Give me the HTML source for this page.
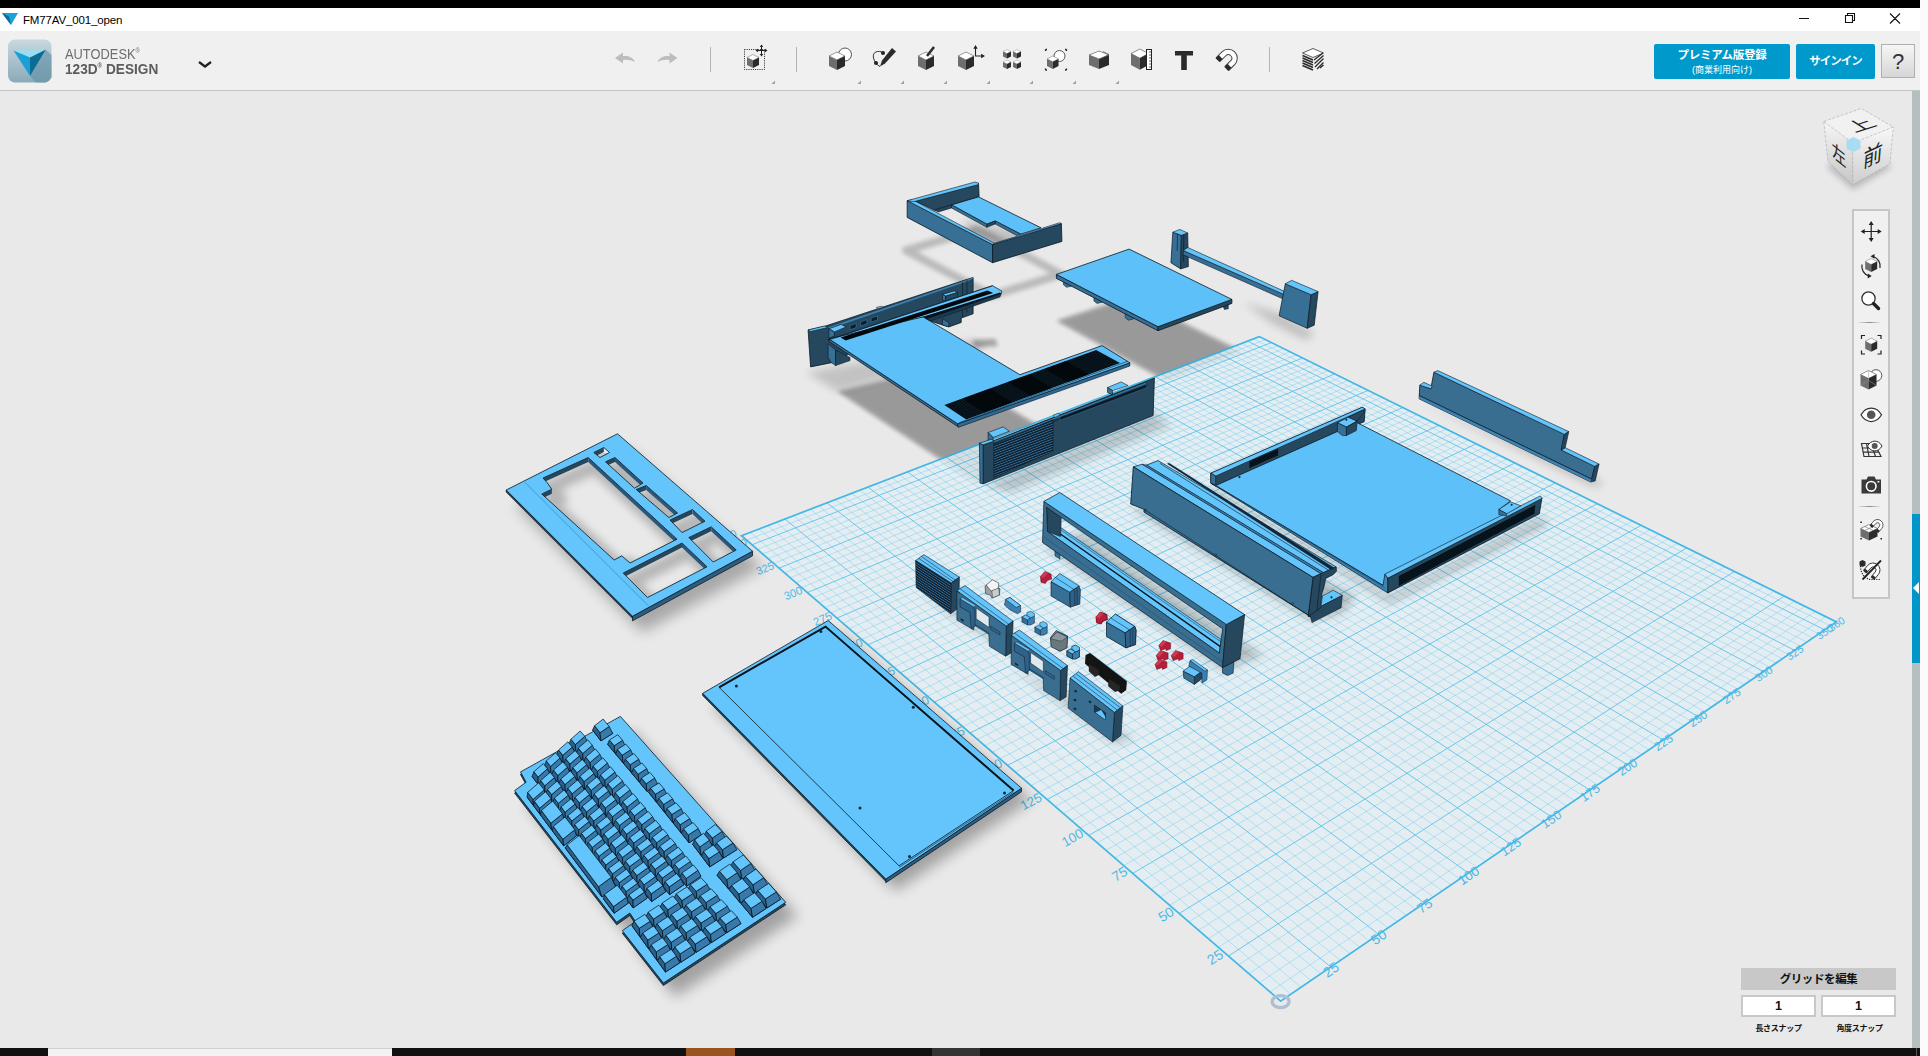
<!DOCTYPE html>
<html lang="ja"><head><meta charset="utf-8"><title>FM77AV_001_open</title>
<style>
html,body{margin:0;padding:0;}
body{width:1928px;height:1056px;overflow:hidden;position:relative;background:#fff;font-family:"Liberation Sans","Noto Sans CJK JP",sans-serif;}
.abs{position:absolute;}
#topblack{left:0;top:0;width:1920px;height:8px;background:#000;}
#title{left:0;top:8px;width:1920px;height:23px;background:#fff;}
#title .t{left:23px;top:5px;font-size:11.5px;color:#000;line-height:14px;letter-spacing:-0.15px;}
#toolbar{left:0;top:31px;width:1920px;height:59px;background:#f0f0f0;border-bottom:1px solid #c6c6c6;}
#view{left:0;top:91px;width:1912px;height:957px;background:#e9e9e9;overflow:hidden;}
#vscroll{left:1912px;top:91px;width:8px;height:957px;background:#b5bfbf;}
#vthumb{left:1912px;top:514px;width:8px;height:149px;background:#0096c8;}
#rightedge{left:1920px;top:0;width:8px;height:1056px;background:#fbfbfb;}
#taskbar{left:0;top:1048px;width:1920px;height:8px;background:#111;}
.btn{background:#0099cc;color:#fff;text-align:center;font-weight:bold;border-radius:2px;}
#b1{left:1654px;top:44px;width:136px;height:35px;}
#b1 .a{font-size:11.500px;line-height:14px;margin-top:3.500px;letter-spacing:-0.300px;}
#b1 .b{font-size:9px;line-height:11px;margin-top:3px;font-weight:normal;}
#b2{left:1796px;top:44px;width:79px;height:35px;font-size:11.500px;line-height:35px;letter-spacing:-1px;}
#b3{left:1881px;top:44px;width:32px;height:32px;border:1px solid #b0b0b0;background:linear-gradient(#f6f6f6,#d6d6d6);text-align:center;font-size:22px;line-height:33px;color:#333;}
#brand1{left:64.500px;top:43.200px;font-size:15.500px;line-height:16px;color:#6e6e6e;transform:scaleX(0.830);transform-origin:0 0;white-space:nowrap;}
#brand2{left:64.500px;top:58.400px;font-size:15.500px;line-height:16px;color:#5c5c5c;font-weight:bold;transform:scaleX(0.880);transform-origin:0 0;white-space:nowrap;}
#panel{left:1852px;top:209px;width:34px;height:385.500px;border:2px solid #c6c6c6;background:#f0f0f0;}
#ghead{left:1741px;top:968px;width:155px;height:22px;background:#c8c8c8;text-align:center;font-size:11.500px;font-weight:bold;line-height:22px;color:#111;letter-spacing:-0.400px;}
.gin{top:995px;width:71px;height:18px;border:2px solid #c8c8c8;background:#fff;text-align:center;font-size:12.500px;font-weight:bold;line-height:18px;color:#111;}
.glab{top:1022.500px;width:75px;text-align:center;font-size:8px;font-weight:bold;line-height:11px;color:#111;letter-spacing:-0.300px;}
</style></head><body>
<div class="abs" id="view"><svg id="scene" width="1912" height="957" viewBox="0 91 1912 957" font-family="Liberation Sans, sans-serif">
<defs><filter id="bl" x="-30%" y="-30%" width="160%" height="160%"><feGaussianBlur stdDeviation="7"/></filter><filter id="bl3" x="-30%" y="-30%" width="160%" height="160%"><feGaussianBlur stdDeviation="2.2"/></filter><filter id="bl2" x="-30%" y="-30%" width="160%" height="160%"><feGaussianBlur stdDeviation="4"/></filter></defs>
<polygon points="806,372 838,392 930,368 985,348 975,340 905,354" fill="#000" opacity="0.16" filter="url(#bl2)"/>
<polygon points="1056.4,320.7 1130,297 1243,352 1166,381" fill="#000" opacity="0.29" filter="url(#bl3)"/>
<polygon points="837.5,391.5 941,367.3 1047.4,430.9 1137.8,398.8 1168.4,417.7 978.9,484.8" fill="#000" opacity="0.29" filter="url(#bl3)"/>
<polygon points="1280.6,1001.1 741.5,535.7 1259.3,336.6 1836.4,621.9" fill="#e4eef2"/>
<path d="M1290.8 994.1L750.3 532.3M1269.9 991.9L1825.8 616.7M1300.9 987.3L759 529M1259.3 982.7L1815.3 611.5M1310.9 980.4L767.7 525.6M1248.9 973.7L1804.9 606.3M1320.8 973.7L776.4 522.3M1238.6 964.8L1794.5 601.2M1340.4 960.3L793.5 515.7M1218.3 947.3L1774.2 591.1M1350.1 953.7L801.9 512.5M1208.4 938.7L1764.1 586.2M1359.6 947.2L810.4 509.2M1198.5 930.2L1754.2 581.2M1369.1 940.7L818.7 506M1188.8 921.8L1744.3 576.4M1387.9 927.9L835.3 499.6M1169.7 905.3L1724.8 566.7M1397.1 921.6L843.5 496.5M1160.2 897.2L1715.2 562M1406.3 915.3L851.7 493.3M1151 889.2L1705.6 557.3M1415.4 909.1L859.8 490.2M1141.8 881.2L1696.2 552.6M1433.3 896.9L875.9 484M1123.7 865.6L1677.5 543.4M1442.2 890.8L883.9 481M1114.8 858L1668.3 538.8M1451 884.9L891.8 477.9M1106 850.4L1659.2 534.3M1459.7 878.9L899.7 474.9M1097.3 842.9L1650.1 529.8M1476.9 867.2L915.3 468.9M1080.2 828.1L1632.2 521M1485.4 861.4L923 465.9M1071.8 820.8L1623.4 516.6M1493.9 855.6L930.7 462.9M1063.4 813.6L1614.6 512.3M1502.2 849.9L938.4 460M1055.2 806.5L1606 508M1518.7 838.6L953.6 454.2M1039 792.5L1588.8 499.5M1526.9 833.1L961.1 451.3M1031 785.6L1580.3 495.3M1535 827.5L968.5 448.4M1023.1 778.8L1571.9 491.1M1543 822.1L976 445.5M1015.3 772L1563.6 487M1558.9 811.2L990.7 439.9M999.9 758.7L1547.1 478.9M1566.7 805.9L998 437.1M992.3 752.2L1539 474.9M1574.5 800.6L1005.3 434.3M984.8 745.7L1530.9 470.9M1582.2 795.3L1012.5 431.5M977.4 739.3L1522.9 466.9M1597.5 784.9L1026.8 426M962.7 726.7L1507 459.1M1605 779.8L1033.9 423.3M955.5 720.4L1499.2 455.2M1612.5 774.7L1040.9 420.6M948.4 714.3L1491.4 451.4M1619.9 769.6L1048 417.9M941.3 708.2L1483.7 447.6M1634.6 759.6L1061.9 412.5M927.4 696.2L1468.5 440M1641.8 754.6L1068.8 409.9M920.5 690.2L1461 436.3M1649 749.7L1075.6 407.2M913.7 684.4L1453.5 432.6M1656.2 744.9L1082.5 404.6M907 678.5L1446.1 429M1670.3 735.2L1096 399.4M893.7 667.1L1431.5 421.7M1677.3 730.4L1102.7 396.8M887.1 661.4L1424.2 418.1M1684.2 725.7L1109.4 394.2M880.7 655.8L1417 414.6M1691.1 721L1116 391.7M874.2 650.3L1409.9 411M1704.7 711.7L1129.2 386.6M861.6 639.4L1395.8 404.1M1711.5 707.1L1135.7 384.1M855.3 634L1388.8 400.6M1718.1 702.6L1142.2 381.6M849.1 628.6L1381.9 397.2M1724.8 698.1L1148.7 379.1M843 623.3L1375 393.8M1737.9 689.1L1161.5 374.2M830.9 612.9L1361.4 387.1M1744.4 684.7L1167.9 371.8M824.9 607.7L1354.7 383.7M1750.8 680.3L1174.2 369.3M819 602.6L1348 380.4M1757.2 675.9L1180.5 366.9M813.2 597.6L1341.3 377.2M1769.9 667.3L1193 362.1M801.6 587.6L1328.2 370.7M1776.1 663L1199.1 359.7M795.9 582.7L1321.7 367.5M1782.4 658.8L1205.3 357.4M790.2 577.8L1315.3 364.3M1788.5 654.6L1211.4 355M784.6 572.9L1308.9 361.1M1800.7 646.2L1223.6 350.3M773.6 563.4L1296.2 354.9M1806.8 642.1L1229.6 348M768.1 558.7L1290 351.8M1812.8 638L1235.6 345.7M762.7 554L1283.8 348.7M1818.8 633.9L1241.6 343.4M757.3 549.4L1277.6 345.6M1830.6 625.9L1253.4 338.9M746.7 540.2L1265.3 339.6" stroke="#6cc8ec" stroke-width="0.7" opacity="0.6" fill="none"/>
<path d="M1280.6 1001.1L741.5 535.7M1280.6 1001.1L1836.4 621.9M1330.7 966.9L784.9 519M1228.4 956L1784.3 596.1M1378.5 934.3L827 502.8M1179.2 913.5L1734.5 571.5M1424.4 903L867.9 487.1M1132.7 873.4L1686.8 548M1468.3 873L907.5 471.9M1088.7 835.4L1641.1 525.4M1510.5 844.2L946 457.1M1047 799.5L1597.3 503.7M1551 816.6L983.4 442.7M1007.5 765.4L1555.3 482.9M1589.9 790.1L1019.7 428.7M970 733L1514.9 463M1627.3 764.6L1054.9 415.2M934.3 702.1L1476.1 443.8M1663.3 740L1089.3 402M900.3 672.8L1438.8 425.3M1697.9 716.4L1122.6 389.2M867.9 644.8L1402.8 407.5M1731.4 693.6L1155.1 376.7M836.9 618.1L1368.2 390.4M1763.6 671.6L1186.7 364.5M807.4 592.6L1334.8 373.9M1794.7 650.4L1217.5 352.7M779.1 568.1L1302.5 358M1824.7 629.9L1247.5 341.1M752 544.8L1271.4 342.6M1836.4 621.9L1259.3 336.6M741.5 535.7L1259.3 336.6" stroke="#55c0e9" stroke-width="1" opacity="0.85" fill="none"/>
<polygon points="1280.6,1001.1 741.5,535.7 1259.3,336.6 1836.4,621.9" fill="none" stroke="#45b8e6" stroke-width="1.7"/>
<text x="1228.4" y="956" font-size="14.2" text-anchor="end" transform="rotate(-32.9 1228.4 956)" fill="#4ab9e8" dx="-4" dy="-1.4">25</text>
<text x="1330.7" y="966.9" font-size="14.2" text-anchor="middle" transform="rotate(-34.3 1330.7 966.9)" fill="#4ab9e8" dx="-1.4" dy="7.4">25</text>
<text x="1179.2" y="913.5" font-size="13.9" text-anchor="end" transform="rotate(-31.6 1179.2 913.5)" fill="#4ab9e8" dx="-4" dy="-1.4">50</text>
<text x="1378.5" y="934.3" font-size="13.9" text-anchor="middle" transform="rotate(-34.3 1378.5 934.3)" fill="#4ab9e8" dx="-1.4" dy="7.3">50</text>
<text x="1132.7" y="873.4" font-size="13.7" text-anchor="end" transform="rotate(-30.4 1132.7 873.4)" fill="#4ab9e8" dx="-4" dy="-1.4">75</text>
<text x="1424.4" y="903" font-size="13.7" text-anchor="middle" transform="rotate(-34.3 1424.4 903)" fill="#4ab9e8" dx="-1.4" dy="7.1">75</text>
<text x="1088.7" y="835.4" font-size="13.4" text-anchor="end" transform="rotate(-29.3 1088.7 835.4)" fill="#4ab9e8" dx="-4" dy="-1.3">100</text>
<text x="1468.3" y="873" font-size="13.4" text-anchor="middle" transform="rotate(-34.3 1468.3 873)" fill="#4ab9e8" dx="-1.3" dy="7">100</text>
<text x="1047" y="799.5" font-size="13.1" text-anchor="end" transform="rotate(-28.3 1047 799.5)" fill="#4ab9e8" dx="-4" dy="-1.3">125</text>
<text x="1510.5" y="844.2" font-size="13.1" text-anchor="middle" transform="rotate(-34.3 1510.5 844.2)" fill="#4ab9e8" dx="-1.3" dy="6.8">125</text>
<text x="1007.5" y="765.4" font-size="12.8" text-anchor="end" transform="rotate(-27.3 1007.5 765.4)" fill="#4ab9e8" dx="-4" dy="-1.3">150</text>
<text x="1551" y="816.6" font-size="12.8" text-anchor="middle" transform="rotate(-34.3 1551 816.6)" fill="#4ab9e8" dx="-1.3" dy="6.7">150</text>
<text x="970" y="733" font-size="12.6" text-anchor="end" transform="rotate(-26.4 970 733)" fill="#4ab9e8" dx="-4" dy="-1.3">175</text>
<text x="1589.9" y="790.1" font-size="12.6" text-anchor="middle" transform="rotate(-34.3 1589.9 790.1)" fill="#4ab9e8" dx="-1.3" dy="6.5">175</text>
<text x="934.3" y="702.1" font-size="12.3" text-anchor="end" transform="rotate(-25.5 934.3 702.1)" fill="#4ab9e8" dx="-4" dy="-1.2">200</text>
<text x="1627.3" y="764.6" font-size="12.3" text-anchor="middle" transform="rotate(-34.3 1627.3 764.6)" fill="#4ab9e8" dx="-1.2" dy="6.4">200</text>
<text x="900.3" y="672.8" font-size="12" text-anchor="end" transform="rotate(-24.7 900.3 672.8)" fill="#4ab9e8" dx="-4" dy="-1.2">225</text>
<text x="1663.3" y="740" font-size="12" text-anchor="middle" transform="rotate(-34.3 1663.3 740)" fill="#4ab9e8" dx="-1.2" dy="6.2">225</text>
<text x="867.9" y="644.8" font-size="11.7" text-anchor="end" transform="rotate(-23.9 867.9 644.8)" fill="#4ab9e8" dx="-4" dy="-1.2">250</text>
<text x="1697.9" y="716.4" font-size="11.7" text-anchor="middle" transform="rotate(-34.3 1697.9 716.4)" fill="#4ab9e8" dx="-1.2" dy="6.1">250</text>
<text x="836.9" y="618.1" font-size="11.4" text-anchor="end" transform="rotate(-23.2 836.9 618.1)" fill="#4ab9e8" dx="-4" dy="-1.1">275</text>
<text x="1731.4" y="693.6" font-size="11.4" text-anchor="middle" transform="rotate(-34.3 1731.4 693.6)" fill="#4ab9e8" dx="-1.1" dy="6">275</text>
<text x="807.4" y="592.6" font-size="11.2" text-anchor="end" transform="rotate(-22.5 807.4 592.6)" fill="#4ab9e8" dx="-4" dy="-1.1">300</text>
<text x="1763.6" y="671.6" font-size="11.2" text-anchor="middle" transform="rotate(-34.3 1763.6 671.6)" fill="#4ab9e8" dx="-1.1" dy="5.8">300</text>
<text x="779.1" y="568.1" font-size="10.9" text-anchor="end" transform="rotate(-21.9 779.1 568.1)" fill="#4ab9e8" dx="-4" dy="-1.1">325</text>
<text x="1794.7" y="650.4" font-size="10.9" text-anchor="middle" transform="rotate(-34.3 1794.7 650.4)" fill="#4ab9e8" dx="-1.1" dy="5.7">325</text>
<text x="752" y="544.8" font-size="10.6" text-anchor="end" transform="rotate(-21.3 752 544.8)" fill="#4ab9e8" dx="-4" dy="-1.1">350</text>
<text x="1824.7" y="629.9" font-size="10.6" text-anchor="middle" transform="rotate(-34.3 1824.7 629.9)" fill="#4ab9e8" dx="-1.1" dy="5.5">350</text>
<text x="741.5" y="535.7" font-size="10.5" text-anchor="end" transform="rotate(-21 741.5 535.7)" fill="#4ab9e8" dx="-4" dy="-1.1">360</text>
<text x="1836.4" y="621.9" font-size="10.5" text-anchor="middle" transform="rotate(-34.3 1836.4 621.9)" fill="#4ab9e8" dx="-1.1" dy="5.5">360</text>
<ellipse cx="1280.6" cy="1001.6" rx="8.5" ry="6" fill="none" stroke="#adbfd0" stroke-width="3.2"/>
<polygon points="516.2,506 627.5,449.8 762.5,567.2 642.5,632.2" fill="#000" opacity="0.28" filter="url(#bl)"/>
<polygon points="506.2,490 632.5,616.2 632.5,618.2 506.2,492" fill="#26485f" stroke="#0b1822" stroke-width="0.8" stroke-linejoin="round"/>
<polygon points="632.5,616.2 752.5,551.2 752.5,555.8 632.5,620.8" fill="#2e5d80" stroke="#0b1822" stroke-width="0.8" stroke-linejoin="round"/>
<polygon points="506.2,490 617.5,433.8 752.5,551.2 632.5,616.2" fill="#63c5fb" stroke="#0b1822" stroke-width="0.8" stroke-linejoin="round"/>
<polyline points="523.8,481.2 648.8,606.2" fill="none" stroke="#3b8fc4" stroke-width="0.8"/>
<clipPath id="kf0"><polygon points="543,478 588.2,457.5 677,539.2 630,563 621.8,555.8 614.2,560 541.8,494 551.8,489.2 547,482.5"/></clipPath><g clip-path="url(#kf0)">
<polygon points="543,478 588.2,457.5 677,539.2 630,563 621.8,555.8 614.2,560 541.8,494 551.8,489.2 547,482.5" fill="#e9e9e9"/>
<polygon points="543,478 588.2,457.5 677,539.2 630,563 621.8,555.8 614.2,560 541.8,494 551.8,489.2 547,482.5" fill="#000" opacity="0.0" filter="url(#bl)"/>
<polygon points="543,478 588.2,457.5 677,539.2 630,563 621.8,555.8 614.2,560 541.8,494 551.8,489.2 547,482.5" fill="none" stroke="#000" stroke-width="14" opacity="0.22" filter="url(#bl2)" transform="translate(7,9)"/>
<polygon points="543,478 588.2,457.5 588.2,462 543,482.5" fill="#26485f"/>
<polygon points="588.2,457.5 677,539.2 677,543.8 588.2,462" fill="#2b587a"/>
<polygon points="541.8,494 551.8,489.2 551.8,493.8 541.8,498.5" fill="#26485f"/>
</g>
<polyline points="543,478 588.2,457.5 677,539.2 630,563 621.8,555.8 614.2,560 541.8,494 551.8,489.2 547,482.5 543,478" fill="none" stroke="#0b1822" stroke-width="0.8"/>
<clipPath id="kf1"><polygon points="605.5,461.8 615,457.5 643,483 634.5,488.2"/></clipPath><g clip-path="url(#kf1)">
<polygon points="605.5,461.8 615,457.5 643,483 634.5,488.2" fill="#e9e9e9"/>
<polygon points="605.5,461.8 615,457.5 643,483 634.5,488.2" fill="#000" opacity="0.0" filter="url(#bl)"/>
<polygon points="605.5,461.8 615,457.5 643,483 634.5,488.2" fill="none" stroke="#000" stroke-width="14" opacity="0.22" filter="url(#bl2)" transform="translate(7,9)"/>
<polygon points="605.5,461.8 615,457.5 615,462 605.5,466.2" fill="#26485f"/>
<polygon points="615,457.5 643,483 643,487.5 615,462" fill="#2b587a"/>
</g>
<polyline points="605.5,461.8 615,457.5 643,483 634.5,488.2 605.5,461.8" fill="none" stroke="#0b1822" stroke-width="0.8"/>
<clipPath id="kf2"><polygon points="636.2,489.5 646.2,485.5 677.5,513 668.8,517.5"/></clipPath><g clip-path="url(#kf2)">
<polygon points="636.2,489.5 646.2,485.5 677.5,513 668.8,517.5" fill="#e9e9e9"/>
<polygon points="636.2,489.5 646.2,485.5 677.5,513 668.8,517.5" fill="#000" opacity="0.0" filter="url(#bl)"/>
<polygon points="636.2,489.5 646.2,485.5 677.5,513 668.8,517.5" fill="none" stroke="#000" stroke-width="14" opacity="0.22" filter="url(#bl2)" transform="translate(7,9)"/>
<polygon points="636.2,489.5 646.2,485.5 646.2,490 636.2,494" fill="#26485f"/>
<polygon points="646.2,485.5 677.5,513 677.5,517.5 646.2,490" fill="#2b587a"/>
</g>
<polyline points="636.2,489.5 646.2,485.5 677.5,513 668.8,517.5 636.2,489.5" fill="none" stroke="#0b1822" stroke-width="0.8"/>
<clipPath id="kf3"><polygon points="670,520 692.5,509.5 705,521.2 682,532.5"/></clipPath><g clip-path="url(#kf3)">
<polygon points="670,520 692.5,509.5 705,521.2 682,532.5" fill="#e9e9e9"/>
<polygon points="670,520 692.5,509.5 705,521.2 682,532.5" fill="#000" opacity="0.0" filter="url(#bl)"/>
<polygon points="670,520 692.5,509.5 705,521.2 682,532.5" fill="none" stroke="#000" stroke-width="14" opacity="0.22" filter="url(#bl2)" transform="translate(7,9)"/>
<polygon points="670,520 692.5,509.5 692.5,514 670,524.5" fill="#26485f"/>
<polygon points="692.5,509.5 705,521.2 705,525.8 692.5,514" fill="#2b587a"/>
</g>
<polyline points="670,520 692.5,509.5 705,521.2 682,532.5 670,520" fill="none" stroke="#0b1822" stroke-width="0.8"/>
<clipPath id="kf4"><polygon points="688.8,537.5 711.2,526.8 736.2,550 713.2,562"/></clipPath><g clip-path="url(#kf4)">
<polygon points="688.8,537.5 711.2,526.8 736.2,550 713.2,562" fill="#e9e9e9"/>
<polygon points="688.8,537.5 711.2,526.8 736.2,550 713.2,562" fill="#000" opacity="0.0" filter="url(#bl)"/>
<polygon points="688.8,537.5 711.2,526.8 736.2,550 713.2,562" fill="none" stroke="#000" stroke-width="14" opacity="0.22" filter="url(#bl2)" transform="translate(7,9)"/>
<polygon points="688.8,537.5 711.2,526.8 711.2,531.2 688.8,542" fill="#26485f"/>
<polygon points="711.2,526.8 736.2,550 736.2,554.5 711.2,531.2" fill="#2b587a"/>
</g>
<polyline points="688.8,537.5 711.2,526.8 736.2,550 713.2,562 688.8,537.5" fill="none" stroke="#0b1822" stroke-width="0.8"/>
<clipPath id="kf5"><polygon points="623.2,573 682,543 707,566.8 647.5,597.5"/></clipPath><g clip-path="url(#kf5)">
<polygon points="623.2,573 682,543 707,566.8 647.5,597.5" fill="#e9e9e9"/>
<polygon points="623.2,573 682,543 707,566.8 647.5,597.5" fill="#000" opacity="0.0" filter="url(#bl)"/>
<polygon points="623.2,573 682,543 707,566.8 647.5,597.5" fill="none" stroke="#000" stroke-width="14" opacity="0.22" filter="url(#bl2)" transform="translate(7,9)"/>
<polygon points="623.2,573 682,543 682,547.5 623.2,577.5" fill="#26485f"/>
<polygon points="682,543 707,566.8 707,571.2 682,547.5" fill="#2b587a"/>
</g>
<polyline points="623.2,573 682,543 707,566.8 647.5,597.5 623.2,573" fill="none" stroke="#0b1822" stroke-width="0.8"/>
<clipPath id="kf6"><polygon points="593.8,452.5 603.8,447.5 609.5,452.5 600,457.5"/></clipPath><g clip-path="url(#kf6)">
<polygon points="593.8,452.5 603.8,447.5 609.5,452.5 600,457.5" fill="#e9e9e9"/>
<polygon points="593.8,452.5 603.8,447.5 609.5,452.5 600,457.5" fill="#000" opacity="0.0" filter="url(#bl)"/>
<polygon points="593.8,452.5 603.8,447.5 609.5,452.5 600,457.5" fill="none" stroke="#000" stroke-width="14" opacity="0.22" filter="url(#bl2)" transform="translate(7,9)"/>
<polygon points="593.8,452.5 603.8,447.5 603.8,452 593.8,457" fill="#26485f"/>
</g>
<polyline points="593.8,452.5 603.8,447.5 609.5,452.5 600,457.5 593.8,452.5" fill="none" stroke="#0b1822" stroke-width="0.8"/>
<polygon points="632.4,730.4 797.7,916.3 675.4,997 634.3,944.7 647.4,935.4 641.8,927 628.7,936.3 526.6,804.6 538.1,796.2 532.5,785.9" fill="#000" opacity="0.3" filter="url(#bl)"/>
<polygon points="620.4,718.9 785.7,904.8 663.4,985.5 622.3,933.2 635.4,923.9 629.8,915.5 616.7,924.8 514.6,793.1 526.1,784.7 520.5,774.4" fill="#26485f" stroke="#0b1822" stroke-width="0.8" stroke-linejoin="round"/>
<polygon points="620.4,716.4 785.7,902.3 663.4,983 622.3,930.7 635.4,921.4 629.8,913 616.7,922.3 514.6,790.6 526.1,782.2 520.5,771.9" fill="#63c5fb" stroke="#0b1822" stroke-width="0.8" stroke-linejoin="round"/>
<polygon points="580.5,733.8 569,744 575.9,752.4 587.6,742.2" fill="#2b608a" stroke="#050d14" stroke-width="0.7" stroke-linejoin="round"/>
<polygon points="569,744 575.9,752.4 575.3,744.6 570.9,739.2" fill="#2b608a" stroke="#050d14" stroke-width="0.7" stroke-linejoin="round"/>
<polygon points="575.9,752.4 587.6,742.2 584.8,736.3 575.3,744.6" fill="#3779aa" stroke="#050d14" stroke-width="0.7" stroke-linejoin="round"/>
<polygon points="580.2,731 570.9,739.2 575.3,744.6 584.8,736.3" fill="#63c5fb" stroke="#050d14" stroke-width="0.7" stroke-linejoin="round"/>
<polygon points="588.1,742.8 576.3,752.9 583.3,761.3 595.2,751.2" fill="#2b608a" stroke="#050d14" stroke-width="0.7" stroke-linejoin="round"/>
<polygon points="576.3,752.9 583.3,761.3 582.7,753.5 578.3,748.1" fill="#2b608a" stroke="#050d14" stroke-width="0.7" stroke-linejoin="round"/>
<polygon points="583.3,761.3 595.2,751.2 592.3,745.3 582.7,753.5" fill="#3779aa" stroke="#050d14" stroke-width="0.7" stroke-linejoin="round"/>
<polygon points="587.8,739.9 578.3,748.1 582.7,753.5 592.3,745.3" fill="#63c5fb" stroke="#050d14" stroke-width="0.7" stroke-linejoin="round"/>
<polygon points="595.6,751.7 583.7,761.8 590.7,770.2 602.7,760.1" fill="#2b608a" stroke="#050d14" stroke-width="0.7" stroke-linejoin="round"/>
<polygon points="583.7,761.8 590.7,770.2 590.1,762.4 585.7,757.1" fill="#2b608a" stroke="#050d14" stroke-width="0.7" stroke-linejoin="round"/>
<polygon points="590.7,770.2 602.7,760.1 599.8,754.2 590.1,762.4" fill="#3779aa" stroke="#050d14" stroke-width="0.7" stroke-linejoin="round"/>
<polygon points="595.3,748.9 585.7,757.1 590.1,762.4 599.8,754.2" fill="#63c5fb" stroke="#050d14" stroke-width="0.7" stroke-linejoin="round"/>
<polygon points="603.2,760.6 591.1,770.8 598,779.1 610.3,769" fill="#2b608a" stroke="#050d14" stroke-width="0.7" stroke-linejoin="round"/>
<polygon points="591.1,770.8 598,779.1 597.5,771.3 593.1,766" fill="#2b608a" stroke="#050d14" stroke-width="0.7" stroke-linejoin="round"/>
<polygon points="598,779.1 610.3,769 607.4,763.1 597.5,771.3" fill="#3779aa" stroke="#050d14" stroke-width="0.7" stroke-linejoin="round"/>
<polygon points="602.9,757.8 593.1,766 597.5,771.3 607.4,763.1" fill="#63c5fb" stroke="#050d14" stroke-width="0.7" stroke-linejoin="round"/>
<polygon points="610.7,769.6 598.5,779.7 605.4,788.1 617.9,778" fill="#2b608a" stroke="#050d14" stroke-width="0.7" stroke-linejoin="round"/>
<polygon points="598.5,779.7 605.4,788.1 604.9,780.2 600.5,774.9" fill="#2b608a" stroke="#050d14" stroke-width="0.7" stroke-linejoin="round"/>
<polygon points="605.4,788.1 617.9,778 614.9,772.1 604.9,780.2" fill="#3779aa" stroke="#050d14" stroke-width="0.7" stroke-linejoin="round"/>
<polygon points="610.4,766.7 600.5,774.9 604.9,780.2 614.9,772.1" fill="#63c5fb" stroke="#050d14" stroke-width="0.7" stroke-linejoin="round"/>
<polygon points="618.3,778.5 605.9,788.6 612.8,797 625.4,786.9" fill="#2b608a" stroke="#050d14" stroke-width="0.7" stroke-linejoin="round"/>
<polygon points="605.9,788.6 612.8,797 612.3,789.2 607.9,783.8" fill="#2b608a" stroke="#050d14" stroke-width="0.7" stroke-linejoin="round"/>
<polygon points="612.8,797 625.4,786.9 622.5,781 612.3,789.2" fill="#3779aa" stroke="#050d14" stroke-width="0.7" stroke-linejoin="round"/>
<polygon points="617.9,775.6 607.9,783.8 612.3,789.2 622.5,781" fill="#63c5fb" stroke="#050d14" stroke-width="0.7" stroke-linejoin="round"/>
<polygon points="625.9,787.4 613.3,797.5 620.2,805.9 633,795.8" fill="#2b608a" stroke="#050d14" stroke-width="0.7" stroke-linejoin="round"/>
<polygon points="613.3,797.5 620.2,805.9 619.7,798.1 615.3,792.7" fill="#2b608a" stroke="#050d14" stroke-width="0.7" stroke-linejoin="round"/>
<polygon points="620.2,805.9 633,795.8 630,789.9 619.7,798.1" fill="#3779aa" stroke="#050d14" stroke-width="0.7" stroke-linejoin="round"/>
<polygon points="625.5,784.6 615.3,792.7 619.7,798.1 630,789.9" fill="#63c5fb" stroke="#050d14" stroke-width="0.7" stroke-linejoin="round"/>
<polygon points="633.4,796.4 620.6,806.4 627.6,814.8 640.5,804.8" fill="#2b608a" stroke="#050d14" stroke-width="0.7" stroke-linejoin="round"/>
<polygon points="620.6,806.4 627.6,814.8 627.1,807 622.7,801.7" fill="#2b608a" stroke="#050d14" stroke-width="0.7" stroke-linejoin="round"/>
<polygon points="627.6,814.8 640.5,804.8 637.5,798.9 627.1,807" fill="#3779aa" stroke="#050d14" stroke-width="0.7" stroke-linejoin="round"/>
<polygon points="633,793.5 622.7,801.7 627.1,807 637.5,798.9" fill="#63c5fb" stroke="#050d14" stroke-width="0.7" stroke-linejoin="round"/>
<polygon points="641,805.3 628,815.4 635,823.7 648.1,813.7" fill="#2b608a" stroke="#050d14" stroke-width="0.7" stroke-linejoin="round"/>
<polygon points="628,815.4 635,823.7 634.5,815.9 630.1,810.6" fill="#2b608a" stroke="#050d14" stroke-width="0.7" stroke-linejoin="round"/>
<polygon points="635,823.7 648.1,813.7 645.1,807.8 634.5,815.9" fill="#3779aa" stroke="#050d14" stroke-width="0.7" stroke-linejoin="round"/>
<polygon points="640.6,802.4 630.1,810.6 634.5,815.9 645.1,807.8" fill="#63c5fb" stroke="#050d14" stroke-width="0.7" stroke-linejoin="round"/>
<polygon points="648.5,814.2 635.4,824.3 642.3,832.7 655.6,822.6" fill="#2b608a" stroke="#050d14" stroke-width="0.7" stroke-linejoin="round"/>
<polygon points="635.4,824.3 642.3,832.7 641.9,824.8 637.5,819.5" fill="#2b608a" stroke="#050d14" stroke-width="0.7" stroke-linejoin="round"/>
<polygon points="642.3,832.7 655.6,822.6 652.6,816.7 641.9,824.8" fill="#3779aa" stroke="#050d14" stroke-width="0.7" stroke-linejoin="round"/>
<polygon points="648.1,811.4 637.5,819.5 641.9,824.8 652.6,816.7" fill="#63c5fb" stroke="#050d14" stroke-width="0.7" stroke-linejoin="round"/>
<polygon points="656.1,823.2 642.8,833.2 649.7,841.6 663.2,831.6" fill="#2b608a" stroke="#050d14" stroke-width="0.7" stroke-linejoin="round"/>
<polygon points="642.8,833.2 649.7,841.6 649.3,833.8 644.9,828.4" fill="#2b608a" stroke="#050d14" stroke-width="0.7" stroke-linejoin="round"/>
<polygon points="649.7,841.6 663.2,831.6 660.2,825.7 649.3,833.8" fill="#3779aa" stroke="#050d14" stroke-width="0.7" stroke-linejoin="round"/>
<polygon points="655.6,820.3 644.9,828.4 649.3,833.8 660.2,825.7" fill="#63c5fb" stroke="#050d14" stroke-width="0.7" stroke-linejoin="round"/>
<polygon points="663.6,832.1 650.2,842.1 657.1,850.5 670.7,840.5" fill="#2b608a" stroke="#050d14" stroke-width="0.7" stroke-linejoin="round"/>
<polygon points="650.2,842.1 657.1,850.5 656.7,842.7 652.3,837.3" fill="#2b608a" stroke="#050d14" stroke-width="0.7" stroke-linejoin="round"/>
<polygon points="657.1,850.5 670.7,840.5 667.7,834.6 656.7,842.7" fill="#3779aa" stroke="#050d14" stroke-width="0.7" stroke-linejoin="round"/>
<polygon points="663.2,829.2 652.3,837.3 656.7,842.7 667.7,834.6" fill="#63c5fb" stroke="#050d14" stroke-width="0.7" stroke-linejoin="round"/>
<polygon points="671.2,841 657.5,851 664.5,859.4 678.3,849.4" fill="#2b608a" stroke="#050d14" stroke-width="0.7" stroke-linejoin="round"/>
<polygon points="657.5,851 664.5,859.4 664.1,851.6 659.7,846.2" fill="#2b608a" stroke="#050d14" stroke-width="0.7" stroke-linejoin="round"/>
<polygon points="664.5,859.4 678.3,849.4 675.2,843.5 664.1,851.6" fill="#3779aa" stroke="#050d14" stroke-width="0.7" stroke-linejoin="round"/>
<polygon points="670.7,838.2 659.7,846.2 664.1,851.6 675.2,843.5" fill="#63c5fb" stroke="#050d14" stroke-width="0.7" stroke-linejoin="round"/>
<polygon points="678.8,850 664.9,859.9 671.9,868.3 685.9,858.4" fill="#2b608a" stroke="#050d14" stroke-width="0.7" stroke-linejoin="round"/>
<polygon points="664.9,859.9 671.9,868.3 671.5,860.5 667.1,855.2" fill="#2b608a" stroke="#050d14" stroke-width="0.7" stroke-linejoin="round"/>
<polygon points="671.9,868.3 685.9,858.4 682.8,852.5 671.5,860.5" fill="#3779aa" stroke="#050d14" stroke-width="0.7" stroke-linejoin="round"/>
<polygon points="678.3,847.1 667.1,855.2 671.5,860.5 682.8,852.5" fill="#63c5fb" stroke="#050d14" stroke-width="0.7" stroke-linejoin="round"/>
<polygon points="686.3,858.9 672.3,868.9 679.2,877.2 693.4,867.3" fill="#2b608a" stroke="#050d14" stroke-width="0.7" stroke-linejoin="round"/>
<polygon points="672.3,868.9 679.2,877.2 678.9,869.4 674.5,864.1" fill="#2b608a" stroke="#050d14" stroke-width="0.7" stroke-linejoin="round"/>
<polygon points="679.2,877.2 693.4,867.3 690.3,861.4 678.9,869.4" fill="#3779aa" stroke="#050d14" stroke-width="0.7" stroke-linejoin="round"/>
<polygon points="685.8,856 674.5,864.1 678.9,869.4 690.3,861.4" fill="#63c5fb" stroke="#050d14" stroke-width="0.7" stroke-linejoin="round"/>
<polygon points="693.9,867.8 679.7,877.8 686.6,886.2 701,876.2" fill="#2b608a" stroke="#050d14" stroke-width="0.7" stroke-linejoin="round"/>
<polygon points="679.7,877.8 686.6,886.2 686.3,878.4 681.9,873" fill="#2b608a" stroke="#050d14" stroke-width="0.7" stroke-linejoin="round"/>
<polygon points="686.6,886.2 701,876.2 697.9,870.3 686.3,878.4" fill="#3779aa" stroke="#050d14" stroke-width="0.7" stroke-linejoin="round"/>
<polygon points="693.3,865 681.9,873 686.3,878.4 697.9,870.3" fill="#63c5fb" stroke="#050d14" stroke-width="0.7" stroke-linejoin="round"/>
<polygon points="568.2,744.7 556.7,754.8 563.3,763.1 575,752.9" fill="#2b608a" stroke="#050d14" stroke-width="0.7" stroke-linejoin="round"/>
<polygon points="556.7,754.8 563.3,763.1 562.8,755.3 558.5,750" fill="#2b608a" stroke="#050d14" stroke-width="0.7" stroke-linejoin="round"/>
<polygon points="563.3,763.1 575,752.9 572.3,747.1 562.8,755.3" fill="#3779aa" stroke="#050d14" stroke-width="0.7" stroke-linejoin="round"/>
<polygon points="567.9,741.8 558.5,750 562.8,755.3 572.3,747.1" fill="#63c5fb" stroke="#050d14" stroke-width="0.7" stroke-linejoin="round"/>
<polygon points="575.5,753.4 563.7,763.6 570.4,771.8 582.3,761.7" fill="#2b608a" stroke="#050d14" stroke-width="0.7" stroke-linejoin="round"/>
<polygon points="563.7,763.6 570.4,771.8 569.9,764.1 565.7,758.8" fill="#2b608a" stroke="#050d14" stroke-width="0.7" stroke-linejoin="round"/>
<polygon points="570.4,771.8 582.3,761.7 579.5,755.8 569.9,764.1" fill="#3779aa" stroke="#050d14" stroke-width="0.7" stroke-linejoin="round"/>
<polygon points="575.2,750.6 565.7,758.8 569.9,764.1 579.5,755.8" fill="#63c5fb" stroke="#050d14" stroke-width="0.7" stroke-linejoin="round"/>
<polygon points="582.7,762.2 570.8,772.4 577.5,780.6 589.6,770.5" fill="#2b608a" stroke="#050d14" stroke-width="0.7" stroke-linejoin="round"/>
<polygon points="570.8,772.4 577.5,780.6 577,772.8 572.8,767.6" fill="#2b608a" stroke="#050d14" stroke-width="0.7" stroke-linejoin="round"/>
<polygon points="577.5,780.6 589.6,770.5 586.7,764.6 577,772.8" fill="#3779aa" stroke="#050d14" stroke-width="0.7" stroke-linejoin="round"/>
<polygon points="582.4,759.4 572.8,767.6 577,772.8 586.7,764.6" fill="#63c5fb" stroke="#050d14" stroke-width="0.7" stroke-linejoin="round"/>
<polygon points="590,771 577.9,781.1 584.6,789.4 596.8,779.3" fill="#2b608a" stroke="#050d14" stroke-width="0.7" stroke-linejoin="round"/>
<polygon points="577.9,781.1 584.6,789.4 584.1,781.6 579.9,776.3" fill="#2b608a" stroke="#050d14" stroke-width="0.7" stroke-linejoin="round"/>
<polygon points="584.6,789.4 596.8,779.3 594,773.4 584.1,781.6" fill="#3779aa" stroke="#050d14" stroke-width="0.7" stroke-linejoin="round"/>
<polygon points="589.6,768.1 579.9,776.3 584.1,781.6 594,773.4" fill="#63c5fb" stroke="#050d14" stroke-width="0.7" stroke-linejoin="round"/>
<polygon points="597.3,779.8 585,789.9 591.7,798.2 604.1,788" fill="#2b608a" stroke="#050d14" stroke-width="0.7" stroke-linejoin="round"/>
<polygon points="585,789.9 591.7,798.2 591.2,790.4 587,785.1" fill="#2b608a" stroke="#050d14" stroke-width="0.7" stroke-linejoin="round"/>
<polygon points="591.7,798.2 604.1,788 601.2,782.2 591.2,790.4" fill="#3779aa" stroke="#050d14" stroke-width="0.7" stroke-linejoin="round"/>
<polygon points="596.9,776.9 587,785.1 591.2,790.4 601.2,782.2" fill="#63c5fb" stroke="#050d14" stroke-width="0.7" stroke-linejoin="round"/>
<polygon points="604.5,788.6 592.1,798.7 598.8,806.9 611.3,796.8" fill="#2b608a" stroke="#050d14" stroke-width="0.7" stroke-linejoin="round"/>
<polygon points="592.1,798.7 598.8,806.9 598.3,799.1 594.1,793.9" fill="#2b608a" stroke="#050d14" stroke-width="0.7" stroke-linejoin="round"/>
<polygon points="598.8,806.9 611.3,796.8 608.5,791 598.3,799.1" fill="#3779aa" stroke="#050d14" stroke-width="0.7" stroke-linejoin="round"/>
<polygon points="604.1,785.7 594.1,793.9 598.3,799.1 608.5,791" fill="#63c5fb" stroke="#050d14" stroke-width="0.7" stroke-linejoin="round"/>
<polygon points="611.8,797.4 599.2,807.4 605.8,815.7 618.6,805.6" fill="#2b608a" stroke="#050d14" stroke-width="0.7" stroke-linejoin="round"/>
<polygon points="599.2,807.4 605.8,815.7 605.4,807.9 601.2,802.6" fill="#2b608a" stroke="#050d14" stroke-width="0.7" stroke-linejoin="round"/>
<polygon points="605.8,815.7 618.6,805.6 615.7,799.8 605.4,807.9" fill="#3779aa" stroke="#050d14" stroke-width="0.7" stroke-linejoin="round"/>
<polygon points="611.4,794.5 601.2,802.6 605.4,807.9 615.7,799.8" fill="#63c5fb" stroke="#050d14" stroke-width="0.7" stroke-linejoin="round"/>
<polygon points="619,806.1 606.3,816.2 612.9,824.5 625.9,814.4" fill="#2b608a" stroke="#050d14" stroke-width="0.7" stroke-linejoin="round"/>
<polygon points="606.3,816.2 612.9,824.5 612.5,816.7 608.3,811.4" fill="#2b608a" stroke="#050d14" stroke-width="0.7" stroke-linejoin="round"/>
<polygon points="612.9,824.5 625.9,814.4 623,808.5 612.5,816.7" fill="#3779aa" stroke="#050d14" stroke-width="0.7" stroke-linejoin="round"/>
<polygon points="618.6,803.3 608.3,811.4 612.5,816.7 623,808.5" fill="#63c5fb" stroke="#050d14" stroke-width="0.7" stroke-linejoin="round"/>
<polygon points="626.3,814.9 613.4,825 620,833.2 633.1,823.2" fill="#2b608a" stroke="#050d14" stroke-width="0.7" stroke-linejoin="round"/>
<polygon points="613.4,825 620,833.2 619.6,825.4 615.4,820.2" fill="#2b608a" stroke="#050d14" stroke-width="0.7" stroke-linejoin="round"/>
<polygon points="620,833.2 633.1,823.2 630.2,817.3 619.6,825.4" fill="#3779aa" stroke="#050d14" stroke-width="0.7" stroke-linejoin="round"/>
<polygon points="625.9,812.1 615.4,820.2 619.6,825.4 630.2,817.3" fill="#63c5fb" stroke="#050d14" stroke-width="0.7" stroke-linejoin="round"/>
<polygon points="633.6,823.7 620.4,833.7 627.1,842 640.4,832" fill="#2b608a" stroke="#050d14" stroke-width="0.7" stroke-linejoin="round"/>
<polygon points="620.4,833.7 627.1,842 626.7,834.2 622.5,828.9" fill="#2b608a" stroke="#050d14" stroke-width="0.7" stroke-linejoin="round"/>
<polygon points="627.1,842 640.4,832 637.4,826.1 626.7,834.2" fill="#3779aa" stroke="#050d14" stroke-width="0.7" stroke-linejoin="round"/>
<polygon points="633.1,820.8 622.5,828.9 626.7,834.2 637.4,826.1" fill="#63c5fb" stroke="#050d14" stroke-width="0.7" stroke-linejoin="round"/>
<polygon points="640.8,832.5 627.5,842.5 634.2,850.8 647.6,840.7" fill="#2b608a" stroke="#050d14" stroke-width="0.7" stroke-linejoin="round"/>
<polygon points="627.5,842.5 634.2,850.8 633.8,843 629.6,837.7" fill="#2b608a" stroke="#050d14" stroke-width="0.7" stroke-linejoin="round"/>
<polygon points="634.2,850.8 647.6,840.7 644.7,834.9 633.8,843" fill="#3779aa" stroke="#050d14" stroke-width="0.7" stroke-linejoin="round"/>
<polygon points="640.3,829.6 629.6,837.7 633.8,843 644.7,834.9" fill="#63c5fb" stroke="#050d14" stroke-width="0.7" stroke-linejoin="round"/>
<polygon points="648.1,841.3 634.6,851.3 641.3,859.5 654.9,849.5" fill="#2b608a" stroke="#050d14" stroke-width="0.7" stroke-linejoin="round"/>
<polygon points="634.6,851.3 641.3,859.5 641,851.7 636.7,846.5" fill="#2b608a" stroke="#050d14" stroke-width="0.7" stroke-linejoin="round"/>
<polygon points="641.3,859.5 654.9,849.5 651.9,843.7 641,851.7" fill="#3779aa" stroke="#050d14" stroke-width="0.7" stroke-linejoin="round"/>
<polygon points="647.6,838.4 636.7,846.5 641,851.7 651.9,843.7" fill="#63c5fb" stroke="#050d14" stroke-width="0.7" stroke-linejoin="round"/>
<polygon points="655.3,850.1 641.7,860 648.4,868.3 662.2,858.3" fill="#2b608a" stroke="#050d14" stroke-width="0.7" stroke-linejoin="round"/>
<polygon points="641.7,860 648.4,868.3 648.1,860.5 643.8,855.3" fill="#2b608a" stroke="#050d14" stroke-width="0.7" stroke-linejoin="round"/>
<polygon points="648.4,868.3 662.2,858.3 659.2,852.4 648.1,860.5" fill="#3779aa" stroke="#050d14" stroke-width="0.7" stroke-linejoin="round"/>
<polygon points="654.8,847.2 643.8,855.3 648.1,860.5 659.2,852.4" fill="#63c5fb" stroke="#050d14" stroke-width="0.7" stroke-linejoin="round"/>
<polygon points="662.6,858.8 648.8,868.8 655.5,877.1 669.4,867.1" fill="#2b608a" stroke="#050d14" stroke-width="0.7" stroke-linejoin="round"/>
<polygon points="648.8,868.8 655.5,877.1 655.2,869.3 650.9,864" fill="#2b608a" stroke="#050d14" stroke-width="0.7" stroke-linejoin="round"/>
<polygon points="655.5,877.1 669.4,867.1 666.4,861.2 655.2,869.3" fill="#3779aa" stroke="#050d14" stroke-width="0.7" stroke-linejoin="round"/>
<polygon points="662.1,856 650.9,864 655.2,869.3 666.4,861.2" fill="#63c5fb" stroke="#050d14" stroke-width="0.7" stroke-linejoin="round"/>
<polygon points="669.9,867.6 655.9,877.6 662.5,885.8 676.7,875.9" fill="#2b608a" stroke="#050d14" stroke-width="0.7" stroke-linejoin="round"/>
<polygon points="655.9,877.6 662.5,885.8 662.3,878.1 658,872.8" fill="#2b608a" stroke="#050d14" stroke-width="0.7" stroke-linejoin="round"/>
<polygon points="662.5,885.8 676.7,875.9 673.7,870 662.3,878.1" fill="#3779aa" stroke="#050d14" stroke-width="0.7" stroke-linejoin="round"/>
<polygon points="669.3,864.7 658,872.8 662.3,878.1 673.7,870" fill="#63c5fb" stroke="#050d14" stroke-width="0.7" stroke-linejoin="round"/>
<polygon points="677.1,876.4 663,886.4 669.6,894.6 683.9,884.7" fill="#2b608a" stroke="#050d14" stroke-width="0.7" stroke-linejoin="round"/>
<polygon points="663,886.4 669.6,894.6 669.4,886.8 665.1,881.6" fill="#2b608a" stroke="#050d14" stroke-width="0.7" stroke-linejoin="round"/>
<polygon points="669.6,894.6 683.9,884.7 680.9,878.8 669.4,886.8" fill="#3779aa" stroke="#050d14" stroke-width="0.7" stroke-linejoin="round"/>
<polygon points="676.6,873.5 665.1,881.6 669.4,886.8 680.9,878.8" fill="#63c5fb" stroke="#050d14" stroke-width="0.7" stroke-linejoin="round"/>
<polygon points="555.9,755.5 544.4,765.7 551.1,774.2 562.8,764.1" fill="#2b608a" stroke="#050d14" stroke-width="0.7" stroke-linejoin="round"/>
<polygon points="544.4,765.7 551.1,774.2 550.6,766.4 546.3,760.9" fill="#2b608a" stroke="#050d14" stroke-width="0.7" stroke-linejoin="round"/>
<polygon points="551.1,774.2 562.8,764.1 560,758.1 550.6,766.4" fill="#3779aa" stroke="#050d14" stroke-width="0.7" stroke-linejoin="round"/>
<polygon points="555.6,752.7 546.3,760.9 550.6,766.4 560,758.1" fill="#63c5fb" stroke="#050d14" stroke-width="0.7" stroke-linejoin="round"/>
<polygon points="563.3,764.6 551.5,774.8 558.3,783.3 570.2,773.2" fill="#2b608a" stroke="#050d14" stroke-width="0.7" stroke-linejoin="round"/>
<polygon points="551.5,774.8 558.3,783.3 557.8,775.5 553.5,770" fill="#2b608a" stroke="#050d14" stroke-width="0.7" stroke-linejoin="round"/>
<polygon points="558.3,783.3 570.2,773.2 567.4,767.3 557.8,775.5" fill="#3779aa" stroke="#050d14" stroke-width="0.7" stroke-linejoin="round"/>
<polygon points="563,761.8 553.5,770 557.8,775.5 567.4,767.3" fill="#63c5fb" stroke="#050d14" stroke-width="0.7" stroke-linejoin="round"/>
<polygon points="570.6,773.7 558.7,783.9 565.5,792.4 577.6,782.3" fill="#2b608a" stroke="#050d14" stroke-width="0.7" stroke-linejoin="round"/>
<polygon points="558.7,783.9 565.5,792.4 565,784.6 560.7,779.1" fill="#2b608a" stroke="#050d14" stroke-width="0.7" stroke-linejoin="round"/>
<polygon points="565.5,792.4 577.6,782.3 574.7,776.4 565,784.6" fill="#3779aa" stroke="#050d14" stroke-width="0.7" stroke-linejoin="round"/>
<polygon points="570.3,770.9 560.7,779.1 565,784.6 574.7,776.4" fill="#63c5fb" stroke="#050d14" stroke-width="0.7" stroke-linejoin="round"/>
<polygon points="578,782.8 565.9,793 572.6,801.5 584.9,791.4" fill="#2b608a" stroke="#050d14" stroke-width="0.7" stroke-linejoin="round"/>
<polygon points="565.9,793 572.6,801.5 572.2,793.7 567.9,788.2" fill="#2b608a" stroke="#050d14" stroke-width="0.7" stroke-linejoin="round"/>
<polygon points="572.6,801.5 584.9,791.4 582.1,785.5 572.2,793.7" fill="#3779aa" stroke="#050d14" stroke-width="0.7" stroke-linejoin="round"/>
<polygon points="577.6,780 567.9,788.2 572.2,793.7 582.1,785.5" fill="#63c5fb" stroke="#050d14" stroke-width="0.7" stroke-linejoin="round"/>
<polygon points="585.4,792 573.1,802.1 579.8,810.6 592.3,800.5" fill="#2b608a" stroke="#050d14" stroke-width="0.7" stroke-linejoin="round"/>
<polygon points="573.1,802.1 579.8,810.6 579.4,802.8 575,797.3" fill="#2b608a" stroke="#050d14" stroke-width="0.7" stroke-linejoin="round"/>
<polygon points="579.8,810.6 592.3,800.5 589.4,794.6 579.4,802.8" fill="#3779aa" stroke="#050d14" stroke-width="0.7" stroke-linejoin="round"/>
<polygon points="585,789.1 575,797.3 579.4,802.8 589.4,794.6" fill="#63c5fb" stroke="#050d14" stroke-width="0.7" stroke-linejoin="round"/>
<polygon points="592.7,801.1 580.3,811.2 587,819.7 599.6,809.6" fill="#2b608a" stroke="#050d14" stroke-width="0.7" stroke-linejoin="round"/>
<polygon points="580.3,811.2 587,819.7 586.6,811.9 582.2,806.4" fill="#2b608a" stroke="#050d14" stroke-width="0.7" stroke-linejoin="round"/>
<polygon points="587,819.7 599.6,809.6 596.7,803.7 586.6,811.9" fill="#3779aa" stroke="#050d14" stroke-width="0.7" stroke-linejoin="round"/>
<polygon points="592.3,798.2 582.2,806.4 586.6,811.9 596.7,803.7" fill="#63c5fb" stroke="#050d14" stroke-width="0.7" stroke-linejoin="round"/>
<polygon points="600.1,810.2 587.4,820.3 594.2,828.8 607,818.7" fill="#2b608a" stroke="#050d14" stroke-width="0.7" stroke-linejoin="round"/>
<polygon points="587.4,820.3 594.2,828.8 593.8,821 589.4,815.5" fill="#2b608a" stroke="#050d14" stroke-width="0.7" stroke-linejoin="round"/>
<polygon points="594.2,828.8 607,818.7 604.1,812.8 593.8,821" fill="#3779aa" stroke="#050d14" stroke-width="0.7" stroke-linejoin="round"/>
<polygon points="599.7,807.3 589.4,815.5 593.8,821 604.1,812.8" fill="#63c5fb" stroke="#050d14" stroke-width="0.7" stroke-linejoin="round"/>
<polygon points="607.4,819.3 594.6,829.4 601.4,837.9 614.3,827.9" fill="#2b608a" stroke="#050d14" stroke-width="0.7" stroke-linejoin="round"/>
<polygon points="594.6,829.4 601.4,837.9 600.9,830.1 596.6,824.6" fill="#2b608a" stroke="#050d14" stroke-width="0.7" stroke-linejoin="round"/>
<polygon points="601.4,837.9 614.3,827.9 611.4,821.9 600.9,830.1" fill="#3779aa" stroke="#050d14" stroke-width="0.7" stroke-linejoin="round"/>
<polygon points="607,816.5 596.6,824.6 600.9,830.1 611.4,821.9" fill="#63c5fb" stroke="#050d14" stroke-width="0.7" stroke-linejoin="round"/>
<polygon points="614.8,828.4 601.8,838.5 608.5,847 621.7,837" fill="#2b608a" stroke="#050d14" stroke-width="0.7" stroke-linejoin="round"/>
<polygon points="601.8,838.5 608.5,847 608.1,839.2 603.8,833.7" fill="#2b608a" stroke="#050d14" stroke-width="0.7" stroke-linejoin="round"/>
<polygon points="608.5,847 621.7,837 618.7,831 608.1,839.2" fill="#3779aa" stroke="#050d14" stroke-width="0.7" stroke-linejoin="round"/>
<polygon points="614.3,825.6 603.8,833.7 608.1,839.2 618.7,831" fill="#63c5fb" stroke="#050d14" stroke-width="0.7" stroke-linejoin="round"/>
<polygon points="622.1,837.5 609,847.6 615.7,856.1 629.1,846.1" fill="#2b608a" stroke="#050d14" stroke-width="0.7" stroke-linejoin="round"/>
<polygon points="609,847.6 615.7,856.1 615.3,848.3 611,842.8" fill="#2b608a" stroke="#050d14" stroke-width="0.7" stroke-linejoin="round"/>
<polygon points="615.7,856.1 629.1,846.1 626.1,840.2 615.3,848.3" fill="#3779aa" stroke="#050d14" stroke-width="0.7" stroke-linejoin="round"/>
<polygon points="621.7,834.7 611,842.8 615.3,848.3 626.1,840.2" fill="#63c5fb" stroke="#050d14" stroke-width="0.7" stroke-linejoin="round"/>
<polygon points="629.5,846.6 616.1,856.7 622.9,865.2 636.4,855.2" fill="#2b608a" stroke="#050d14" stroke-width="0.7" stroke-linejoin="round"/>
<polygon points="616.1,856.7 622.9,865.2 622.5,857.4 618.2,851.9" fill="#2b608a" stroke="#050d14" stroke-width="0.7" stroke-linejoin="round"/>
<polygon points="622.9,865.2 636.4,855.2 633.4,849.3 622.5,857.4" fill="#3779aa" stroke="#050d14" stroke-width="0.7" stroke-linejoin="round"/>
<polygon points="629,843.8 618.2,851.9 622.5,857.4 633.4,849.3" fill="#63c5fb" stroke="#050d14" stroke-width="0.7" stroke-linejoin="round"/>
<polygon points="636.9,855.7 623.3,865.8 630.1,874.3 643.8,864.3" fill="#2b608a" stroke="#050d14" stroke-width="0.7" stroke-linejoin="round"/>
<polygon points="623.3,865.8 630.1,874.3 629.7,866.5 625.4,861" fill="#2b608a" stroke="#050d14" stroke-width="0.7" stroke-linejoin="round"/>
<polygon points="630.1,874.3 643.8,864.3 640.8,858.4 629.7,866.5" fill="#3779aa" stroke="#050d14" stroke-width="0.7" stroke-linejoin="round"/>
<polygon points="636.4,852.9 625.4,861 629.7,866.5 640.8,858.4" fill="#63c5fb" stroke="#050d14" stroke-width="0.7" stroke-linejoin="round"/>
<polygon points="644.2,864.9 630.5,874.9 637.2,883.4 651.1,873.4" fill="#2b608a" stroke="#050d14" stroke-width="0.7" stroke-linejoin="round"/>
<polygon points="630.5,874.9 637.2,883.4 636.9,875.6 632.6,870.1" fill="#2b608a" stroke="#050d14" stroke-width="0.7" stroke-linejoin="round"/>
<polygon points="637.2,883.4 651.1,873.4 648.1,867.5 636.9,875.6" fill="#3779aa" stroke="#050d14" stroke-width="0.7" stroke-linejoin="round"/>
<polygon points="643.7,862 632.6,870.1 636.9,875.6 648.1,867.5" fill="#63c5fb" stroke="#050d14" stroke-width="0.7" stroke-linejoin="round"/>
<polygon points="651.6,874 637.7,883.9 644.4,892.5 658.5,882.5" fill="#2b608a" stroke="#050d14" stroke-width="0.7" stroke-linejoin="round"/>
<polygon points="637.7,883.9 644.4,892.5 644.1,884.7 639.8,879.2" fill="#2b608a" stroke="#050d14" stroke-width="0.7" stroke-linejoin="round"/>
<polygon points="644.4,892.5 658.5,882.5 655.4,876.6 644.1,884.7" fill="#3779aa" stroke="#050d14" stroke-width="0.7" stroke-linejoin="round"/>
<polygon points="651,871.1 639.8,879.2 644.1,884.7 655.4,876.6" fill="#63c5fb" stroke="#050d14" stroke-width="0.7" stroke-linejoin="round"/>
<polygon points="658.9,883.1 644.9,893 651.6,901.6 665.8,891.7" fill="#2b608a" stroke="#050d14" stroke-width="0.7" stroke-linejoin="round"/>
<polygon points="644.9,893 651.6,901.6 651.3,893.8 647,888.3" fill="#2b608a" stroke="#050d14" stroke-width="0.7" stroke-linejoin="round"/>
<polygon points="651.6,901.6 665.8,891.7 662.8,885.7 651.3,893.8" fill="#3779aa" stroke="#050d14" stroke-width="0.7" stroke-linejoin="round"/>
<polygon points="658.4,880.2 647,888.3 651.3,893.8 662.8,885.7" fill="#63c5fb" stroke="#050d14" stroke-width="0.7" stroke-linejoin="round"/>
<polygon points="543.6,766.3 532.1,776.5 538.4,784.8 550.2,774.6" fill="#2b608a" stroke="#050d14" stroke-width="0.7" stroke-linejoin="round"/>
<polygon points="532.1,776.5 538.4,784.8 538,777 533.9,771.7" fill="#2b608a" stroke="#050d14" stroke-width="0.7" stroke-linejoin="round"/>
<polygon points="538.4,784.8 550.2,774.6 547.4,768.8 538,777" fill="#3779aa" stroke="#050d14" stroke-width="0.7" stroke-linejoin="round"/>
<polygon points="543.3,763.5 533.9,771.7 538,777 547.4,768.8" fill="#63c5fb" stroke="#050d14" stroke-width="0.7" stroke-linejoin="round"/>
<polygon points="550.6,775.1 538.8,785.3 545.2,793.6 557.1,783.4" fill="#2b608a" stroke="#050d14" stroke-width="0.7" stroke-linejoin="round"/>
<polygon points="538.8,785.3 545.2,793.6 544.8,785.8 540.7,780.5" fill="#2b608a" stroke="#050d14" stroke-width="0.7" stroke-linejoin="round"/>
<polygon points="545.2,793.6 557.1,783.4 554.4,777.6 544.8,785.8" fill="#3779aa" stroke="#050d14" stroke-width="0.7" stroke-linejoin="round"/>
<polygon points="550.2,772.3 540.7,780.5 544.8,785.8 554.4,777.6" fill="#63c5fb" stroke="#050d14" stroke-width="0.7" stroke-linejoin="round"/>
<polygon points="557.5,783.9 545.6,794.1 552,802.4 564,792.2" fill="#2b608a" stroke="#050d14" stroke-width="0.7" stroke-linejoin="round"/>
<polygon points="545.6,794.1 552,802.4 551.6,794.6 547.5,789.3" fill="#2b608a" stroke="#050d14" stroke-width="0.7" stroke-linejoin="round"/>
<polygon points="552,802.4 564,792.2 561.3,786.4 551.6,794.6" fill="#3779aa" stroke="#050d14" stroke-width="0.7" stroke-linejoin="round"/>
<polygon points="557.1,781.1 547.5,789.3 551.6,794.6 561.3,786.4" fill="#63c5fb" stroke="#050d14" stroke-width="0.7" stroke-linejoin="round"/>
<polygon points="564.5,792.8 552.4,802.9 558.7,811.2 571,801" fill="#2b608a" stroke="#050d14" stroke-width="0.7" stroke-linejoin="round"/>
<polygon points="552.4,802.9 558.7,811.2 558.3,803.4 554.3,798.1" fill="#2b608a" stroke="#050d14" stroke-width="0.7" stroke-linejoin="round"/>
<polygon points="558.7,811.2 571,801 568.2,795.2 558.3,803.4" fill="#3779aa" stroke="#050d14" stroke-width="0.7" stroke-linejoin="round"/>
<polygon points="564.1,789.9 554.3,798.1 558.3,803.4 568.2,795.2" fill="#63c5fb" stroke="#050d14" stroke-width="0.7" stroke-linejoin="round"/>
<polygon points="571.4,801.6 559.1,811.7 565.5,820 577.9,809.9" fill="#2b608a" stroke="#050d14" stroke-width="0.7" stroke-linejoin="round"/>
<polygon points="559.1,811.7 565.5,820 565.1,812.2 561.1,806.9" fill="#2b608a" stroke="#050d14" stroke-width="0.7" stroke-linejoin="round"/>
<polygon points="565.5,820 577.9,809.9 575.1,804 565.1,812.2" fill="#3779aa" stroke="#050d14" stroke-width="0.7" stroke-linejoin="round"/>
<polygon points="571,798.7 561.1,806.9 565.1,812.2 575.1,804" fill="#63c5fb" stroke="#050d14" stroke-width="0.7" stroke-linejoin="round"/>
<polygon points="578.3,810.4 565.9,820.5 572.3,828.8 584.9,818.7" fill="#2b608a" stroke="#050d14" stroke-width="0.7" stroke-linejoin="round"/>
<polygon points="565.9,820.5 572.3,828.8 571.9,821 567.8,815.7" fill="#2b608a" stroke="#050d14" stroke-width="0.7" stroke-linejoin="round"/>
<polygon points="572.3,828.8 584.9,818.7 582.1,812.8 571.9,821" fill="#3779aa" stroke="#050d14" stroke-width="0.7" stroke-linejoin="round"/>
<polygon points="577.9,807.5 567.8,815.7 571.9,821 582.1,812.8" fill="#63c5fb" stroke="#050d14" stroke-width="0.7" stroke-linejoin="round"/>
<polygon points="585.3,819.2 572.7,829.3 579,837.6 591.8,827.5" fill="#2b608a" stroke="#050d14" stroke-width="0.7" stroke-linejoin="round"/>
<polygon points="572.7,829.3 579,837.6 578.7,829.8 574.6,824.5" fill="#2b608a" stroke="#050d14" stroke-width="0.7" stroke-linejoin="round"/>
<polygon points="579,837.6 591.8,827.5 589,821.6 578.7,829.8" fill="#3779aa" stroke="#050d14" stroke-width="0.7" stroke-linejoin="round"/>
<polygon points="584.8,816.3 574.6,824.5 578.7,829.8 589,821.6" fill="#63c5fb" stroke="#050d14" stroke-width="0.7" stroke-linejoin="round"/>
<polygon points="592.2,828 579.4,838.1 585.8,846.3 598.7,836.3" fill="#2b608a" stroke="#050d14" stroke-width="0.7" stroke-linejoin="round"/>
<polygon points="579.4,838.1 585.8,846.3 585.5,838.6 581.4,833.3" fill="#2b608a" stroke="#050d14" stroke-width="0.7" stroke-linejoin="round"/>
<polygon points="585.8,846.3 598.7,836.3 595.9,830.4 585.5,838.6" fill="#3779aa" stroke="#050d14" stroke-width="0.7" stroke-linejoin="round"/>
<polygon points="591.8,825.1 581.4,833.3 585.5,838.6 595.9,830.4" fill="#63c5fb" stroke="#050d14" stroke-width="0.7" stroke-linejoin="round"/>
<polygon points="599.2,836.8 586.2,846.9 592.6,855.1 605.7,845.1" fill="#2b608a" stroke="#050d14" stroke-width="0.7" stroke-linejoin="round"/>
<polygon points="586.2,846.9 592.6,855.1 592.3,847.4 588.2,842.1" fill="#2b608a" stroke="#050d14" stroke-width="0.7" stroke-linejoin="round"/>
<polygon points="592.6,855.1 605.7,845.1 602.8,839.2 592.3,847.4" fill="#3779aa" stroke="#050d14" stroke-width="0.7" stroke-linejoin="round"/>
<polygon points="598.7,834 588.2,842.1 592.3,847.4 602.8,839.2" fill="#63c5fb" stroke="#050d14" stroke-width="0.7" stroke-linejoin="round"/>
<polygon points="606.1,845.6 593,855.7 599.3,863.9 612.6,853.9" fill="#2b608a" stroke="#050d14" stroke-width="0.7" stroke-linejoin="round"/>
<polygon points="593,855.7 599.3,863.9 599.1,856.2 595,850.9" fill="#2b608a" stroke="#050d14" stroke-width="0.7" stroke-linejoin="round"/>
<polygon points="599.3,863.9 612.6,853.9 609.8,848 599.1,856.2" fill="#3779aa" stroke="#050d14" stroke-width="0.7" stroke-linejoin="round"/>
<polygon points="605.6,842.8 595,850.9 599.1,856.2 609.8,848" fill="#63c5fb" stroke="#050d14" stroke-width="0.7" stroke-linejoin="round"/>
<polygon points="613,854.4 599.7,864.5 606.1,872.7 619.6,862.7" fill="#2b608a" stroke="#050d14" stroke-width="0.7" stroke-linejoin="round"/>
<polygon points="599.7,864.5 606.1,872.7 605.8,865 601.8,859.7" fill="#2b608a" stroke="#050d14" stroke-width="0.7" stroke-linejoin="round"/>
<polygon points="606.1,872.7 619.6,862.7 616.7,856.9 605.8,865" fill="#3779aa" stroke="#050d14" stroke-width="0.7" stroke-linejoin="round"/>
<polygon points="612.5,851.6 601.8,859.7 605.8,865 616.7,856.9" fill="#63c5fb" stroke="#050d14" stroke-width="0.7" stroke-linejoin="round"/>
<polygon points="620,863.3 606.5,873.3 612.9,881.5 626.5,871.5" fill="#2b608a" stroke="#050d14" stroke-width="0.7" stroke-linejoin="round"/>
<polygon points="606.5,873.3 612.9,881.5 612.6,873.8 608.6,868.5" fill="#2b608a" stroke="#050d14" stroke-width="0.7" stroke-linejoin="round"/>
<polygon points="612.9,881.5 626.5,871.5 623.6,865.7 612.6,873.8" fill="#3779aa" stroke="#050d14" stroke-width="0.7" stroke-linejoin="round"/>
<polygon points="619.5,860.4 608.6,868.5 612.6,873.8 623.6,865.7" fill="#63c5fb" stroke="#050d14" stroke-width="0.7" stroke-linejoin="round"/>
<polygon points="626.9,872.1 613.3,882.1 619.6,890.3 633.5,880.4" fill="#2b608a" stroke="#050d14" stroke-width="0.7" stroke-linejoin="round"/>
<polygon points="613.3,882.1 619.6,890.3 619.4,882.6 615.3,877.3" fill="#2b608a" stroke="#050d14" stroke-width="0.7" stroke-linejoin="round"/>
<polygon points="619.6,890.3 633.5,880.4 630.5,874.5 619.4,882.6" fill="#3779aa" stroke="#050d14" stroke-width="0.7" stroke-linejoin="round"/>
<polygon points="626.4,869.2 615.3,877.3 619.4,882.6 630.5,874.5" fill="#63c5fb" stroke="#050d14" stroke-width="0.7" stroke-linejoin="round"/>
<polygon points="633.9,880.9 620.1,890.9 626.4,899.1 640.4,889.2" fill="#2b608a" stroke="#050d14" stroke-width="0.7" stroke-linejoin="round"/>
<polygon points="620.1,890.9 626.4,899.1 626.2,891.4 622.1,886.1" fill="#2b608a" stroke="#050d14" stroke-width="0.7" stroke-linejoin="round"/>
<polygon points="626.4,899.1 640.4,889.2 637.5,883.3 626.2,891.4" fill="#3779aa" stroke="#050d14" stroke-width="0.7" stroke-linejoin="round"/>
<polygon points="633.3,878 622.1,886.1 626.2,891.4 637.5,883.3" fill="#63c5fb" stroke="#050d14" stroke-width="0.7" stroke-linejoin="round"/>
<polygon points="640.8,889.7 626.8,899.7 633.2,907.9 647.3,898" fill="#2b608a" stroke="#050d14" stroke-width="0.7" stroke-linejoin="round"/>
<polygon points="626.8,899.7 633.2,907.9 633,900.1 628.9,894.9" fill="#2b608a" stroke="#050d14" stroke-width="0.7" stroke-linejoin="round"/>
<polygon points="633.2,907.9 647.3,898 644.4,892.1 633,900.1" fill="#3779aa" stroke="#050d14" stroke-width="0.7" stroke-linejoin="round"/>
<polygon points="640.2,886.8 628.9,894.9 633,900.1 644.4,892.1" fill="#63c5fb" stroke="#050d14" stroke-width="0.7" stroke-linejoin="round"/>
<polygon points="538.8,786.9 527.1,797.1 533.3,805.4 545.2,795.2" fill="#2b608a" stroke="#050d14" stroke-width="0.7" stroke-linejoin="round"/>
<polygon points="527.1,797.1 533.3,805.4 533,799.4 527.7,792.3" fill="#2b608a" stroke="#050d14" stroke-width="0.7" stroke-linejoin="round"/>
<polygon points="533.3,805.4 545.2,795.2 544.2,789.9 533,799.4" fill="#3779aa" stroke="#050d14" stroke-width="0.7" stroke-linejoin="round"/>
<polygon points="538.7,782.8 527.7,792.3 533,799.4 544.2,789.9" fill="#63c5fb" stroke="#050d14" stroke-width="0.7" stroke-linejoin="round"/>
<polygon points="545.6,795.8 533.7,805.9 539.9,814.2 552,804.1" fill="#2b608a" stroke="#050d14" stroke-width="0.7" stroke-linejoin="round"/>
<polygon points="533.7,805.9 539.9,814.2 539.7,808.2 534.4,801.2" fill="#2b608a" stroke="#050d14" stroke-width="0.7" stroke-linejoin="round"/>
<polygon points="539.9,814.2 552,804.1 551,798.7 539.7,808.2" fill="#3779aa" stroke="#050d14" stroke-width="0.7" stroke-linejoin="round"/>
<polygon points="545.5,791.7 534.4,801.2 539.7,808.2 551,798.7" fill="#63c5fb" stroke="#050d14" stroke-width="0.7" stroke-linejoin="round"/>
<polygon points="552.6,804.9 540.5,815 551.7,830 564.1,819.9" fill="#2b608a" stroke="#050d14" stroke-width="0.7" stroke-linejoin="round"/>
<polygon points="540.5,815 551.7,830 550.9,823.2 541.4,810.5" fill="#2b608a" stroke="#050d14" stroke-width="0.7" stroke-linejoin="round"/>
<polygon points="551.7,830 564.1,819.9 562.5,813.8 550.9,823.2" fill="#3779aa" stroke="#050d14" stroke-width="0.7" stroke-linejoin="round"/>
<polygon points="552.7,801 541.4,810.5 550.9,823.2 562.5,813.8" fill="#63c5fb" stroke="#050d14" stroke-width="0.7" stroke-linejoin="round"/>
<polygon points="564.9,820.8 552.4,830.9 563.7,845.9 576.4,835.8" fill="#2b608a" stroke="#050d14" stroke-width="0.7" stroke-linejoin="round"/>
<polygon points="552.4,830.9 563.7,845.9 562.9,839.2 553.3,826.4" fill="#2b608a" stroke="#050d14" stroke-width="0.7" stroke-linejoin="round"/>
<polygon points="563.7,845.9 576.4,835.8 574.8,829.7 562.9,839.2" fill="#3779aa" stroke="#050d14" stroke-width="0.7" stroke-linejoin="round"/>
<polygon points="565,817 553.3,826.4 562.9,839.2 574.8,829.7" fill="#63c5fb" stroke="#050d14" stroke-width="0.7" stroke-linejoin="round"/>
<polygon points="578,837.9 565.2,847.9 602,897 615.7,887" fill="#2b608a" stroke="#050d14" stroke-width="0.7" stroke-linejoin="round"/>
<polygon points="565.2,847.9 602,897 598.5,886.7 567.2,844.9" fill="#2b608a" stroke="#050d14" stroke-width="0.7" stroke-linejoin="round"/>
<polygon points="602,897 615.7,887 611.3,877.3 598.5,886.7" fill="#3779aa" stroke="#050d14" stroke-width="0.7" stroke-linejoin="round"/>
<polygon points="579.2,835.5 567.2,844.9 598.5,886.7 611.3,877.3" fill="#63c5fb" stroke="#050d14" stroke-width="0.7" stroke-linejoin="round"/>
<polygon points="617.3,889.1 603.5,899 614.1,913.2 628.2,903.2" fill="#2b608a" stroke="#050d14" stroke-width="0.7" stroke-linejoin="round"/>
<polygon points="603.5,899 614.1,913.2 613.5,906.6 604.4,894.5" fill="#2b608a" stroke="#050d14" stroke-width="0.7" stroke-linejoin="round"/>
<polygon points="614.1,913.2 628.2,903.2 626.6,897.2 613.5,906.6" fill="#3779aa" stroke="#050d14" stroke-width="0.7" stroke-linejoin="round"/>
<polygon points="617.3,885.2 604.4,894.5 613.5,906.6 626.6,897.2" fill="#63c5fb" stroke="#050d14" stroke-width="0.7" stroke-linejoin="round"/>
<polygon points="701.2,880.5 688,889.1 697.2,899.5 710.7,890.8" fill="#2b608a" stroke="#050d14" stroke-width="0.7" stroke-linejoin="round"/>
<polygon points="688,889.1 697.2,899.5 696.2,891.3 690.3,884.7" fill="#2b608a" stroke="#050d14" stroke-width="0.7" stroke-linejoin="round"/>
<polygon points="697.2,899.5 710.7,890.8 707.1,884.3 696.2,891.3" fill="#3779aa" stroke="#050d14" stroke-width="0.7" stroke-linejoin="round"/>
<polygon points="701,877.7 690.3,884.7 696.2,891.3 707.1,884.3" fill="#63c5fb" stroke="#050d14" stroke-width="0.7" stroke-linejoin="round"/>
<polygon points="711.3,891.4 697.8,900.2 707,910.6 720.8,901.7" fill="#2b608a" stroke="#050d14" stroke-width="0.7" stroke-linejoin="round"/>
<polygon points="697.8,900.2 707,910.6 706.1,902.4 700.2,895.8" fill="#2b608a" stroke="#050d14" stroke-width="0.7" stroke-linejoin="round"/>
<polygon points="707,910.6 720.8,901.7 717.2,895.3 706.1,902.4" fill="#3779aa" stroke="#050d14" stroke-width="0.7" stroke-linejoin="round"/>
<polygon points="711.1,888.7 700.2,895.8 706.1,902.4 717.2,895.3" fill="#63c5fb" stroke="#050d14" stroke-width="0.7" stroke-linejoin="round"/>
<polygon points="721.4,902.4 707.6,911.3 716.8,921.7 730.9,912.6" fill="#2b608a" stroke="#050d14" stroke-width="0.7" stroke-linejoin="round"/>
<polygon points="707.6,911.3 716.8,921.7 715.9,913.5 710,906.8" fill="#2b608a" stroke="#050d14" stroke-width="0.7" stroke-linejoin="round"/>
<polygon points="716.8,921.7 730.9,912.6 727.3,906.2 715.9,913.5" fill="#3779aa" stroke="#050d14" stroke-width="0.7" stroke-linejoin="round"/>
<polygon points="721.2,899.6 710,906.8 715.9,913.5 727.3,906.2" fill="#63c5fb" stroke="#050d14" stroke-width="0.7" stroke-linejoin="round"/>
<polygon points="731.5,913.3 717.4,922.4 726.7,932.8 741,923.6" fill="#2b608a" stroke="#050d14" stroke-width="0.7" stroke-linejoin="round"/>
<polygon points="717.4,922.4 726.7,932.8 725.8,924.6 719.9,917.9" fill="#2b608a" stroke="#050d14" stroke-width="0.7" stroke-linejoin="round"/>
<polygon points="726.7,932.8 741,923.6 737.3,917.1 725.8,924.6" fill="#3779aa" stroke="#050d14" stroke-width="0.7" stroke-linejoin="round"/>
<polygon points="731.3,910.6 719.9,917.9 725.8,924.6 737.3,917.1" fill="#63c5fb" stroke="#050d14" stroke-width="0.7" stroke-linejoin="round"/>
<polygon points="687.2,889.6 674,898.2 682.9,908.8 696.4,900.1" fill="#2b608a" stroke="#050d14" stroke-width="0.7" stroke-linejoin="round"/>
<polygon points="674,898.2 682.9,908.8 682,900.6 676.3,893.8" fill="#2b608a" stroke="#050d14" stroke-width="0.7" stroke-linejoin="round"/>
<polygon points="682.9,908.8 696.4,900.1 692.8,893.6 682,900.6" fill="#3779aa" stroke="#050d14" stroke-width="0.7" stroke-linejoin="round"/>
<polygon points="687,886.9 676.3,893.8 682,900.6 692.8,893.6" fill="#63c5fb" stroke="#050d14" stroke-width="0.7" stroke-linejoin="round"/>
<polygon points="696.9,900.7 683.5,909.5 692.4,920.1 706.2,911.2" fill="#2b608a" stroke="#050d14" stroke-width="0.7" stroke-linejoin="round"/>
<polygon points="683.5,909.5 692.4,920.1 691.5,911.8 685.8,905.1" fill="#2b608a" stroke="#050d14" stroke-width="0.7" stroke-linejoin="round"/>
<polygon points="692.4,920.1 706.2,911.2 702.6,904.7 691.5,911.8" fill="#3779aa" stroke="#050d14" stroke-width="0.7" stroke-linejoin="round"/>
<polygon points="696.7,898 685.8,905.1 691.5,911.8 702.6,904.7" fill="#63c5fb" stroke="#050d14" stroke-width="0.7" stroke-linejoin="round"/>
<polygon points="706.7,911.8 693,920.8 701.9,931.3 715.9,922.3" fill="#2b608a" stroke="#050d14" stroke-width="0.7" stroke-linejoin="round"/>
<polygon points="693,920.8 701.9,931.3 701,923.1 695.3,916.3" fill="#2b608a" stroke="#050d14" stroke-width="0.7" stroke-linejoin="round"/>
<polygon points="701.9,931.3 715.9,922.3 712.4,915.8 701,923.1" fill="#3779aa" stroke="#050d14" stroke-width="0.7" stroke-linejoin="round"/>
<polygon points="706.5,909.1 695.3,916.3 701,923.1 712.4,915.8" fill="#63c5fb" stroke="#050d14" stroke-width="0.7" stroke-linejoin="round"/>
<polygon points="716.5,923 702.4,932 711.4,942.6 725.7,933.4" fill="#2b608a" stroke="#050d14" stroke-width="0.7" stroke-linejoin="round"/>
<polygon points="702.4,932 711.4,942.6 710.5,934.3 704.8,927.6" fill="#2b608a" stroke="#050d14" stroke-width="0.7" stroke-linejoin="round"/>
<polygon points="711.4,942.6 725.7,933.4 722.1,926.9 710.5,934.3" fill="#3779aa" stroke="#050d14" stroke-width="0.7" stroke-linejoin="round"/>
<polygon points="716.3,920.2 704.8,927.6 710.5,934.3 722.1,926.9" fill="#63c5fb" stroke="#050d14" stroke-width="0.7" stroke-linejoin="round"/>
<polygon points="673.1,898.8 660,907.3 668.6,918.1 682,909.4" fill="#2b608a" stroke="#050d14" stroke-width="0.7" stroke-linejoin="round"/>
<polygon points="660,907.3 668.6,918.1 667.8,909.8 662.2,903" fill="#2b608a" stroke="#050d14" stroke-width="0.7" stroke-linejoin="round"/>
<polygon points="668.6,918.1 682,909.4 678.6,902.8 667.8,909.8" fill="#3779aa" stroke="#050d14" stroke-width="0.7" stroke-linejoin="round"/>
<polygon points="672.9,896 662.2,903 667.8,909.8 678.6,902.8" fill="#63c5fb" stroke="#050d14" stroke-width="0.7" stroke-linejoin="round"/>
<polygon points="682.6,910 669.1,918.8 677.7,929.5 691.5,920.6" fill="#2b608a" stroke="#050d14" stroke-width="0.7" stroke-linejoin="round"/>
<polygon points="669.1,918.8 677.7,929.5 676.9,921.3 671.4,914.4" fill="#2b608a" stroke="#050d14" stroke-width="0.7" stroke-linejoin="round"/>
<polygon points="677.7,929.5 691.5,920.6 688,914.1 676.9,921.3" fill="#3779aa" stroke="#050d14" stroke-width="0.7" stroke-linejoin="round"/>
<polygon points="682.4,907.3 671.4,914.4 676.9,921.3 688,914.1" fill="#63c5fb" stroke="#050d14" stroke-width="0.7" stroke-linejoin="round"/>
<polygon points="692.1,921.3 678.3,930.2 686.9,941 701,931.9" fill="#2b608a" stroke="#050d14" stroke-width="0.7" stroke-linejoin="round"/>
<polygon points="678.3,930.2 686.9,941 686.1,932.7 680.6,925.8" fill="#2b608a" stroke="#050d14" stroke-width="0.7" stroke-linejoin="round"/>
<polygon points="686.9,941 701,931.9 697.5,925.4 686.1,932.7" fill="#3779aa" stroke="#050d14" stroke-width="0.7" stroke-linejoin="round"/>
<polygon points="691.8,918.6 680.6,925.8 686.1,932.7 697.5,925.4" fill="#63c5fb" stroke="#050d14" stroke-width="0.7" stroke-linejoin="round"/>
<polygon points="701.5,932.6 687.4,941.7 696.1,952.4 710.4,943.2" fill="#2b608a" stroke="#050d14" stroke-width="0.7" stroke-linejoin="round"/>
<polygon points="687.4,941.7 696.1,952.4 695.3,944.1 689.8,937.3" fill="#2b608a" stroke="#050d14" stroke-width="0.7" stroke-linejoin="round"/>
<polygon points="696.1,952.4 710.4,943.2 706.9,936.7 695.3,944.1" fill="#3779aa" stroke="#050d14" stroke-width="0.7" stroke-linejoin="round"/>
<polygon points="701.2,929.9 689.8,937.3 695.3,944.1 706.9,936.7" fill="#63c5fb" stroke="#050d14" stroke-width="0.7" stroke-linejoin="round"/>
<polygon points="659.1,907.9 646,916.4 654.3,927.4 667.7,918.6" fill="#2b608a" stroke="#050d14" stroke-width="0.7" stroke-linejoin="round"/>
<polygon points="646,916.4 654.3,927.4 653.5,919.1 648.2,912.1" fill="#2b608a" stroke="#050d14" stroke-width="0.7" stroke-linejoin="round"/>
<polygon points="654.3,927.4 667.7,918.6 664.3,912 653.5,919.1" fill="#3779aa" stroke="#050d14" stroke-width="0.7" stroke-linejoin="round"/>
<polygon points="658.9,905.2 648.2,912.1 653.5,919.1 664.3,912" fill="#63c5fb" stroke="#050d14" stroke-width="0.7" stroke-linejoin="round"/>
<polygon points="668.3,919.3 654.8,928.1 663.1,939 676.9,930.1" fill="#2b608a" stroke="#050d14" stroke-width="0.7" stroke-linejoin="round"/>
<polygon points="654.8,928.1 663.1,939 662.4,930.7 657.1,923.7" fill="#2b608a" stroke="#050d14" stroke-width="0.7" stroke-linejoin="round"/>
<polygon points="663.1,939 676.9,930.1 673.4,923.5 662.4,930.7" fill="#3779aa" stroke="#050d14" stroke-width="0.7" stroke-linejoin="round"/>
<polygon points="668,916.6 657.1,923.7 662.4,930.7 673.4,923.5" fill="#63c5fb" stroke="#050d14" stroke-width="0.7" stroke-linejoin="round"/>
<polygon points="677.4,930.8 663.6,939.7 671.9,950.6 686,941.6" fill="#2b608a" stroke="#050d14" stroke-width="0.7" stroke-linejoin="round"/>
<polygon points="663.6,939.7 671.9,950.6 671.2,942.3 665.9,935.3" fill="#2b608a" stroke="#050d14" stroke-width="0.7" stroke-linejoin="round"/>
<polygon points="671.9,950.6 686,941.6 682.6,935 671.2,942.3" fill="#3779aa" stroke="#050d14" stroke-width="0.7" stroke-linejoin="round"/>
<polygon points="677.1,928.1 665.9,935.3 671.2,942.3 682.6,935" fill="#63c5fb" stroke="#050d14" stroke-width="0.7" stroke-linejoin="round"/>
<polygon points="686.5,942.3 672.5,951.3 680.8,962.3 695.1,953" fill="#2b608a" stroke="#050d14" stroke-width="0.7" stroke-linejoin="round"/>
<polygon points="672.5,951.3 680.8,962.3 680.1,953.9 674.8,946.9" fill="#2b608a" stroke="#050d14" stroke-width="0.7" stroke-linejoin="round"/>
<polygon points="680.8,962.3 695.1,953 691.7,946.5 680.1,953.9" fill="#3779aa" stroke="#050d14" stroke-width="0.7" stroke-linejoin="round"/>
<polygon points="686.2,939.6 674.8,946.9 680.1,953.9 691.7,946.5" fill="#63c5fb" stroke="#050d14" stroke-width="0.7" stroke-linejoin="round"/>
<polygon points="645.1,917 631.9,925.6 639.9,936.7 653.4,927.9" fill="#2b608a" stroke="#050d14" stroke-width="0.7" stroke-linejoin="round"/>
<polygon points="631.9,925.6 639.9,936.7 639.3,928.3 634.1,921.2" fill="#2b608a" stroke="#050d14" stroke-width="0.7" stroke-linejoin="round"/>
<polygon points="639.9,936.7 653.4,927.9 650.1,921.3 639.3,928.3" fill="#3779aa" stroke="#050d14" stroke-width="0.7" stroke-linejoin="round"/>
<polygon points="644.8,914.3 634.1,921.2 639.3,928.3 650.1,921.3" fill="#63c5fb" stroke="#050d14" stroke-width="0.7" stroke-linejoin="round"/>
<polygon points="653.9,928.6 640.4,937.4 648.4,948.5 662.2,939.6" fill="#2b608a" stroke="#050d14" stroke-width="0.7" stroke-linejoin="round"/>
<polygon points="640.4,937.4 648.4,948.5 647.8,940.1 642.7,933" fill="#2b608a" stroke="#050d14" stroke-width="0.7" stroke-linejoin="round"/>
<polygon points="648.4,948.5 662.2,939.6 658.9,932.9 647.8,940.1" fill="#3779aa" stroke="#050d14" stroke-width="0.7" stroke-linejoin="round"/>
<polygon points="653.6,925.9 642.7,933 647.8,940.1 658.9,932.9" fill="#63c5fb" stroke="#050d14" stroke-width="0.7" stroke-linejoin="round"/>
<polygon points="662.7,940.3 649,949.2 656.9,960.3 671,951.2" fill="#2b608a" stroke="#050d14" stroke-width="0.7" stroke-linejoin="round"/>
<polygon points="649,949.2 656.9,960.3 656.3,951.9 651.2,944.8" fill="#2b608a" stroke="#050d14" stroke-width="0.7" stroke-linejoin="round"/>
<polygon points="656.9,960.3 671,951.2 667.7,944.6 656.3,951.9" fill="#3779aa" stroke="#050d14" stroke-width="0.7" stroke-linejoin="round"/>
<polygon points="662.4,937.6 651.2,944.8 656.3,951.9 667.7,944.6" fill="#63c5fb" stroke="#050d14" stroke-width="0.7" stroke-linejoin="round"/>
<polygon points="671.6,951.9 657.5,961 665.5,972.1 679.8,962.8" fill="#2b608a" stroke="#050d14" stroke-width="0.7" stroke-linejoin="round"/>
<polygon points="657.5,961 665.5,972.1 664.9,963.7 659.7,956.6" fill="#2b608a" stroke="#050d14" stroke-width="0.7" stroke-linejoin="round"/>
<polygon points="665.5,972.1 679.8,962.8 676.4,956.2 664.9,963.7" fill="#3779aa" stroke="#050d14" stroke-width="0.7" stroke-linejoin="round"/>
<polygon points="671.2,949.3 659.7,956.6 664.9,963.7 676.4,956.2" fill="#63c5fb" stroke="#050d14" stroke-width="0.7" stroke-linejoin="round"/>
<polygon points="617.9,737.8 607.6,744.3 615.1,753.3 625.5,746.7" fill="#2b608a" stroke="#050d14" stroke-width="0.7" stroke-linejoin="round"/>
<polygon points="607.6,744.3 615.1,753.3 614.2,745.7 609.4,740" fill="#2b608a" stroke="#050d14" stroke-width="0.7" stroke-linejoin="round"/>
<polygon points="615.1,753.3 625.5,746.7 622.6,740.3 614.2,745.7" fill="#3779aa" stroke="#050d14" stroke-width="0.7" stroke-linejoin="round"/>
<polygon points="617.8,734.7 609.4,740 614.2,745.7 622.6,740.3" fill="#63c5fb" stroke="#050d14" stroke-width="0.7" stroke-linejoin="round"/>
<polygon points="625.9,747.2 615.6,753.9 623.1,762.8 633.5,756.1" fill="#2b608a" stroke="#050d14" stroke-width="0.7" stroke-linejoin="round"/>
<polygon points="615.6,753.9 623.1,762.8 622.2,755.2 617.4,749.5" fill="#2b608a" stroke="#050d14" stroke-width="0.7" stroke-linejoin="round"/>
<polygon points="623.1,762.8 633.5,756.1 630.6,749.8 622.2,755.2" fill="#3779aa" stroke="#050d14" stroke-width="0.7" stroke-linejoin="round"/>
<polygon points="625.8,744.1 617.4,749.5 622.2,755.2 630.6,749.8" fill="#63c5fb" stroke="#050d14" stroke-width="0.7" stroke-linejoin="round"/>
<polygon points="634,756.7 623.5,763.4 631.1,772.3 641.5,765.5" fill="#2b608a" stroke="#050d14" stroke-width="0.7" stroke-linejoin="round"/>
<polygon points="623.5,763.4 631.1,772.3 630.2,764.7 625.4,759" fill="#2b608a" stroke="#050d14" stroke-width="0.7" stroke-linejoin="round"/>
<polygon points="631.1,772.3 641.5,765.5 638.7,759.2 630.2,764.7" fill="#3779aa" stroke="#050d14" stroke-width="0.7" stroke-linejoin="round"/>
<polygon points="633.9,753.5 625.4,759 630.2,764.7 638.7,759.2" fill="#63c5fb" stroke="#050d14" stroke-width="0.7" stroke-linejoin="round"/>
<polygon points="642,766.1 631.5,772.9 639.1,781.8 649.5,774.9" fill="#2b608a" stroke="#050d14" stroke-width="0.7" stroke-linejoin="round"/>
<polygon points="631.5,772.9 639.1,781.8 638.2,774.2 633.4,768.5" fill="#2b608a" stroke="#050d14" stroke-width="0.7" stroke-linejoin="round"/>
<polygon points="639.1,781.8 649.5,774.9 646.7,768.6 638.2,774.2" fill="#3779aa" stroke="#050d14" stroke-width="0.7" stroke-linejoin="round"/>
<polygon points="641.9,763 633.4,768.5 638.2,774.2 646.7,768.6" fill="#63c5fb" stroke="#050d14" stroke-width="0.7" stroke-linejoin="round"/>
<polygon points="650,775.5 639.5,782.4 647,791.4 657.6,784.3" fill="#2b608a" stroke="#050d14" stroke-width="0.7" stroke-linejoin="round"/>
<polygon points="639.5,782.4 647,791.4 646.2,783.7 641.4,778" fill="#2b608a" stroke="#050d14" stroke-width="0.7" stroke-linejoin="round"/>
<polygon points="647,791.4 657.6,784.3 654.7,778 646.2,783.7" fill="#3779aa" stroke="#050d14" stroke-width="0.7" stroke-linejoin="round"/>
<polygon points="649.9,772.4 641.4,778 646.2,783.7 654.7,778" fill="#63c5fb" stroke="#050d14" stroke-width="0.7" stroke-linejoin="round"/>
<polygon points="659,786 648.6,792.3 656.3,802 667.1,795.3" fill="#2b608a" stroke="#050d14" stroke-width="0.7" stroke-linejoin="round"/>
<polygon points="648.6,792.3 656.3,802 655.5,794.2 650.5,788.1" fill="#2b608a" stroke="#050d14" stroke-width="0.7" stroke-linejoin="round"/>
<polygon points="656.3,802 667.1,795.3 664.1,788.9 655.5,794.2" fill="#3779aa" stroke="#050d14" stroke-width="0.7" stroke-linejoin="round"/>
<polygon points="659,782.9 650.5,788.1 655.5,794.2 664.1,788.9" fill="#63c5fb" stroke="#050d14" stroke-width="0.7" stroke-linejoin="round"/>
<polygon points="667.6,795.9 656.8,802.6 664.5,812.2 675.7,805.2" fill="#2b608a" stroke="#050d14" stroke-width="0.7" stroke-linejoin="round"/>
<polygon points="656.8,802.6 664.5,812.2 663.7,804.4 658.8,798.2" fill="#2b608a" stroke="#050d14" stroke-width="0.7" stroke-linejoin="round"/>
<polygon points="664.5,812.2 675.7,805.2 672.6,798.8 663.7,804.4" fill="#3779aa" stroke="#050d14" stroke-width="0.7" stroke-linejoin="round"/>
<polygon points="667.5,792.8 658.8,798.2 663.7,804.4 672.6,798.8" fill="#63c5fb" stroke="#050d14" stroke-width="0.7" stroke-linejoin="round"/>
<polygon points="676.2,805.8 665,812.8 672.7,822.4 684.2,815" fill="#2b608a" stroke="#050d14" stroke-width="0.7" stroke-linejoin="round"/>
<polygon points="665,812.8 672.7,822.4 671.9,814.5 667,808.4" fill="#2b608a" stroke="#050d14" stroke-width="0.7" stroke-linejoin="round"/>
<polygon points="672.7,822.4 684.2,815 681.2,808.7 671.9,814.5" fill="#3779aa" stroke="#050d14" stroke-width="0.7" stroke-linejoin="round"/>
<polygon points="676,802.7 667,808.4 671.9,814.5 681.2,808.7" fill="#63c5fb" stroke="#050d14" stroke-width="0.7" stroke-linejoin="round"/>
<polygon points="684.7,815.6 673.2,823 680.9,832.6 692.8,824.9" fill="#2b608a" stroke="#050d14" stroke-width="0.7" stroke-linejoin="round"/>
<polygon points="673.2,823 680.9,832.6 680.2,824.7 675.2,818.6" fill="#2b608a" stroke="#050d14" stroke-width="0.7" stroke-linejoin="round"/>
<polygon points="680.9,832.6 692.8,824.9 689.7,818.6 680.2,824.7" fill="#3779aa" stroke="#050d14" stroke-width="0.7" stroke-linejoin="round"/>
<polygon points="684.6,812.6 675.2,818.6 680.2,824.7 689.7,818.6" fill="#63c5fb" stroke="#050d14" stroke-width="0.7" stroke-linejoin="round"/>
<polygon points="693.3,825.5 681.4,833.2 689.1,842.8 701.4,834.8" fill="#2b608a" stroke="#050d14" stroke-width="0.7" stroke-linejoin="round"/>
<polygon points="681.4,833.2 689.1,842.8 688.4,834.9 683.5,828.8" fill="#2b608a" stroke="#050d14" stroke-width="0.7" stroke-linejoin="round"/>
<polygon points="689.1,842.8 701.4,834.8 698.2,828.5 688.4,834.9" fill="#3779aa" stroke="#050d14" stroke-width="0.7" stroke-linejoin="round"/>
<polygon points="693.1,822.5 683.5,828.8 688.4,834.9 698.2,828.5" fill="#63c5fb" stroke="#050d14" stroke-width="0.7" stroke-linejoin="round"/>
<polygon points="715.1,827.2 704.2,835.5 713.6,846.4 725.6,838.1" fill="#2b608a" stroke="#050d14" stroke-width="0.7" stroke-linejoin="round"/>
<polygon points="704.2,835.5 713.6,846.4 712.4,838.1 706.3,831.1" fill="#2b608a" stroke="#050d14" stroke-width="0.7" stroke-linejoin="round"/>
<polygon points="713.6,846.4 725.6,838.1 721.9,831.4 712.4,838.1" fill="#3779aa" stroke="#050d14" stroke-width="0.7" stroke-linejoin="round"/>
<polygon points="715.3,824.5 706.3,831.1 712.4,838.1 721.9,831.4" fill="#63c5fb" stroke="#050d14" stroke-width="0.7" stroke-linejoin="round"/>
<polygon points="726.3,838.8 714.2,847.1 723.6,858 736.8,849.7" fill="#2b608a" stroke="#050d14" stroke-width="0.7" stroke-linejoin="round"/>
<polygon points="714.2,847.1 723.6,858 722.5,849.7 716.5,842.8" fill="#2b608a" stroke="#050d14" stroke-width="0.7" stroke-linejoin="round"/>
<polygon points="723.6,858 736.8,849.7 733,843 722.5,849.7" fill="#3779aa" stroke="#050d14" stroke-width="0.7" stroke-linejoin="round"/>
<polygon points="726.3,836.1 716.5,842.8 722.5,849.7 733,843" fill="#63c5fb" stroke="#050d14" stroke-width="0.7" stroke-linejoin="round"/>
<polygon points="703.5,836 692.6,844.2 700.8,855.2 712.8,846.9" fill="#2b608a" stroke="#050d14" stroke-width="0.7" stroke-linejoin="round"/>
<polygon points="692.6,844.2 700.8,855.2 699.9,846.9 694.6,839.9" fill="#2b608a" stroke="#050d14" stroke-width="0.7" stroke-linejoin="round"/>
<polygon points="700.8,855.2 712.8,846.9 709.4,840.2 699.9,846.9" fill="#3779aa" stroke="#050d14" stroke-width="0.7" stroke-linejoin="round"/>
<polygon points="703.5,833.3 694.6,839.9 699.9,846.9 709.4,840.2" fill="#63c5fb" stroke="#050d14" stroke-width="0.7" stroke-linejoin="round"/>
<polygon points="713.4,847.6 701.4,855.9 709.7,866.9 722.8,858.5" fill="#2b608a" stroke="#050d14" stroke-width="0.7" stroke-linejoin="round"/>
<polygon points="701.4,855.9 709.7,866.9 708.9,858.6 703.5,851.6" fill="#2b608a" stroke="#050d14" stroke-width="0.7" stroke-linejoin="round"/>
<polygon points="709.7,866.9 722.8,858.5 719.3,851.9 708.9,858.6" fill="#3779aa" stroke="#050d14" stroke-width="0.7" stroke-linejoin="round"/>
<polygon points="713.4,844.9 703.5,851.6 708.9,858.6 719.3,851.9" fill="#63c5fb" stroke="#050d14" stroke-width="0.7" stroke-linejoin="round"/>
<polygon points="743.1,857.3 730.4,866 742.1,879.4 755.1,870.7" fill="#2b608a" stroke="#050d14" stroke-width="0.7" stroke-linejoin="round"/>
<polygon points="730.4,866 742.1,879.4 740.5,870.5 733,861.9" fill="#2b608a" stroke="#050d14" stroke-width="0.7" stroke-linejoin="round"/>
<polygon points="742.1,879.4 755.1,870.7 750.9,863.4 740.5,870.5" fill="#3779aa" stroke="#050d14" stroke-width="0.7" stroke-linejoin="round"/>
<polygon points="743.3,854.9 733,861.9 740.5,870.5 750.9,863.4" fill="#63c5fb" stroke="#050d14" stroke-width="0.7" stroke-linejoin="round"/>
<polygon points="755.8,871.5 742.9,880.3 754.6,893.7 767.8,884.9" fill="#2b608a" stroke="#050d14" stroke-width="0.7" stroke-linejoin="round"/>
<polygon points="742.9,880.3 754.6,893.7 753,884.8 745.5,876.2" fill="#2b608a" stroke="#050d14" stroke-width="0.7" stroke-linejoin="round"/>
<polygon points="754.6,893.7 767.8,884.9 763.6,877.7 753,884.8" fill="#3779aa" stroke="#050d14" stroke-width="0.7" stroke-linejoin="round"/>
<polygon points="756,869.1 745.5,876.2 753,884.8 763.6,877.7" fill="#63c5fb" stroke="#050d14" stroke-width="0.7" stroke-linejoin="round"/>
<polygon points="768.6,885.8 755.3,894.5 767,908 780.6,899.2" fill="#2b608a" stroke="#050d14" stroke-width="0.7" stroke-linejoin="round"/>
<polygon points="755.3,894.5 767,908 765.4,899 757.9,890.5" fill="#2b608a" stroke="#050d14" stroke-width="0.7" stroke-linejoin="round"/>
<polygon points="767,908 780.6,899.2 776.3,891.9 765.4,899" fill="#3779aa" stroke="#050d14" stroke-width="0.7" stroke-linejoin="round"/>
<polygon points="768.7,883.4 757.9,890.5 765.4,899 776.3,891.9" fill="#63c5fb" stroke="#050d14" stroke-width="0.7" stroke-linejoin="round"/>
<polygon points="729.6,866.5 717,875.2 728.3,888.7 741.3,880" fill="#2b608a" stroke="#050d14" stroke-width="0.7" stroke-linejoin="round"/>
<polygon points="717,875.2 728.3,888.7 726.8,879.7 719.5,871.2" fill="#2b608a" stroke="#050d14" stroke-width="0.7" stroke-linejoin="round"/>
<polygon points="728.3,888.7 741.3,880 737.2,872.7 726.8,879.7" fill="#3779aa" stroke="#050d14" stroke-width="0.7" stroke-linejoin="round"/>
<polygon points="729.8,864.1 719.5,871.2 726.8,879.7 737.2,872.7" fill="#63c5fb" stroke="#050d14" stroke-width="0.7" stroke-linejoin="round"/>
<polygon points="742,880.8 729.1,889.5 740.4,903 753.7,894.2" fill="#2b608a" stroke="#050d14" stroke-width="0.7" stroke-linejoin="round"/>
<polygon points="729.1,889.5 740.4,903 738.9,894.1 731.6,885.5" fill="#2b608a" stroke="#050d14" stroke-width="0.7" stroke-linejoin="round"/>
<polygon points="740.4,903 753.7,894.2 749.6,887 738.9,894.1" fill="#3779aa" stroke="#050d14" stroke-width="0.7" stroke-linejoin="round"/>
<polygon points="742.2,878.4 731.6,885.5 738.9,894.1 749.6,887" fill="#63c5fb" stroke="#050d14" stroke-width="0.7" stroke-linejoin="round"/>
<polygon points="754.4,895.1 741.2,903.8 752.5,917.3 766.1,908.5" fill="#2b608a" stroke="#050d14" stroke-width="0.7" stroke-linejoin="round"/>
<polygon points="741.2,903.8 752.5,917.3 751,908.4 743.8,899.8" fill="#2b608a" stroke="#050d14" stroke-width="0.7" stroke-linejoin="round"/>
<polygon points="752.5,917.3 766.1,908.5 762,901.3 751,908.4" fill="#3779aa" stroke="#050d14" stroke-width="0.7" stroke-linejoin="round"/>
<polygon points="754.5,892.7 743.8,899.8 751,908.4 762,901.3" fill="#63c5fb" stroke="#050d14" stroke-width="0.7" stroke-linejoin="round"/>
<polygon points="603,721.7 592.6,730 600.9,740.9 612.7,733.5" fill="#2b608a" stroke="#050d14" stroke-width="0.7" stroke-linejoin="round"/>
<polygon points="592.6,730 600.9,740.9 600,732.7 594.6,725.7" fill="#2b608a" stroke="#050d14" stroke-width="0.7" stroke-linejoin="round"/>
<polygon points="600.9,740.9 612.7,733.5 609.2,726.5 600,732.7" fill="#3779aa" stroke="#050d14" stroke-width="0.7" stroke-linejoin="round"/>
<polygon points="603.2,719.1 594.6,725.7 600,732.7 609.2,726.5" fill="#63c5fb" stroke="#050d14" stroke-width="0.7" stroke-linejoin="round"/>
<polygon points="838.2,632.5 1031.5,800.2 895.8,891.1 712.7,705.3" fill="#000" opacity="0.3" filter="url(#bl)"/>
<polygon points="702.7,693.3 885.8,879.1 885.8,881.3 702.7,695.5" fill="#26485f" stroke="#0b1822" stroke-width="0.8" stroke-linejoin="round"/>
<polygon points="885.8,879.1 1021.5,788.2 1021.5,791.8 885.8,882.7" fill="#2e5d80" stroke="#0b1822" stroke-width="0.8" stroke-linejoin="round"/>
<polygon points="828.2,620.5 1021.5,788.2 885.8,879.1 702.7,693.3" fill="#63c5fb" stroke="#0b1822" stroke-width="0.8" stroke-linejoin="round"/>
<polyline points="719.1,687.3 825.5,626.6 1013.6,790.6" fill="none" stroke="#06121a" stroke-width="2"/>
<polyline points="1013.6,790.6 899,865.8 719.1,687.3" fill="none" stroke="#0b1822" stroke-width="0.8"/>
<polyline points="1013.6,792.2 899,867.4" fill="none" stroke="#1d4a6b" stroke-width="0.8"/>
<circle cx="860" cy="808" r="1.5" fill="#10293a"/>
<circle cx="909.5" cy="856.4" r="1.5" fill="#10293a"/>
<circle cx="1004.5" cy="793.1" r="1.5" fill="#10293a"/>
<circle cx="736.4" cy="686" r="1.5" fill="#10293a"/>
<circle cx="820.9" cy="631.5" r="1.5" fill="#10293a"/>
<circle cx="913.3" cy="707.3" r="1.5" fill="#10293a"/>
<polygon points="837.5,391.5 941,367.3 1047.4,430.9 1137.8,398.8 1168.4,417.7 978.9,484.8" fill="#000" opacity="0.06" filter="url(#bl3)"/>
<polygon points="1056.4,320.7 1130,297 1243,352 1166,381" fill="#000" opacity="0.06" filter="url(#bl3)"/>
<polygon points="971.9,340.3 995.1,338.8 998,346.1 974.8,347.6" fill="#000" opacity="0.3" filter="url(#bl3)"/>
<polygon points="906.2,250.4 991.6,295.7 1060.9,274.4 977.5,229.6" fill="none" stroke="#000" stroke-width="8" opacity="0.2" filter="url(#bl3)" stroke-linejoin="round"/>
<polygon points="915.5,201 978.5,183.5 979.1,196.6 934.3,210.1 915.5,201.2" fill="#26485f" stroke="#0b1822" stroke-width="0.8" stroke-linejoin="round"/>
<clipPath id="tfh"><polygon points="933.8,210.1 951.5,205.4 986.9,225.2 995.2,222.1 1018.1,234.6 995.2,242.9 992.6,244.5"/></clipPath><g clip-path="url(#tfh)">
<polygon points="962.9,220 1025.4,232.5 1025.4,249.2 973.3,242.9" fill="#000" opacity="0.18" filter="url(#bl2)"/>
</g>
<polygon points="951.5,204.9 978.5,196.9 1041,227.8 1020.7,234.1 995.2,221 986.9,224.2" fill="#5ec0f9" stroke="#0b1822" stroke-width="0.8" stroke-linejoin="round"/>
<polygon points="951.5,204.9 986.9,224.2 986.9,227.3 951.5,208" fill="#386f95" stroke="#0b1822" stroke-width="0.6" stroke-linejoin="round"/>
<polygon points="995.2,221 1020.7,234.1 1016.6,235.4 995.2,224" fill="#386f95" stroke="#0b1822" stroke-width="0.6" stroke-linejoin="round"/>
<polygon points="986.9,224.2 995.2,221 995.2,224 986.9,227.3" fill="#26485f" stroke="#0b1822" stroke-width="0.6" stroke-linejoin="round"/>
<polygon points="934.3,210.1 951.5,204.9 951.5,208 938.4,211.9" fill="#26485f" stroke="#0b1822" stroke-width="0.6" stroke-linejoin="round"/>
<polygon points="907.2,200.7 992.6,244.5 992.6,262.7 907.2,217.4" fill="#386f95" stroke="#0b1822" stroke-width="0.8" stroke-linejoin="round"/>
<polygon points="992.6,244.5 1061.4,223.6 1061.9,241.4 992.6,262.7" fill="#26485f" stroke="#0b1822" stroke-width="0.8" stroke-linejoin="round"/>
<polygon points="907.2,200.7 912.4,199.7 994.4,243.2 992.6,244.5" fill="#63c5fb" stroke="#0b1822" stroke-width="0.6" stroke-linejoin="round"/>
<polygon points="907.2,200.7 974.9,182 978.5,183 978.5,184.6 913.4,201.8" fill="#63c5fb" stroke="#0b1822" stroke-width="0.6" stroke-linejoin="round"/>
<polygon points="992.6,244.5 1061.4,223.6 1059.8,222.7 994.4,243.2" fill="#63c5fb" stroke="#0b1822" stroke-width="0.6" stroke-linejoin="round"/>
<defs><pattern id="mesh" width="2.2" height="2.2" patternUnits="userSpaceOnUse" patternTransform="rotate(25)"><rect width="2.2" height="2.2" fill="#0a1620"/><path d="M0 0L2.2 2.2M2.2 0L0 2.2" stroke="#3c86b8" stroke-width="0.45"/></pattern><pattern id="mesh2" width="1.8" height="1.8" patternUnits="userSpaceOnUse" patternTransform="rotate(20)"><rect width="1.8" height="1.8" fill="#02060a"/><path d="M0 0L1.8 1.8" stroke="#1d4866" stroke-width="0.35"/></pattern><pattern id="slat" width="8" height="2.3" patternUnits="userSpaceOnUse" patternTransform="rotate(-21)"><rect width="8" height="2.3" fill="#0d1b27"/><rect width="8" height="0.9" fill="#356f9b"/></pattern><pattern id="slat2" width="8" height="2.1" patternUnits="userSpaceOnUse" patternTransform="rotate(33)"><rect width="8" height="2.1" fill="#0d1b27"/><rect width="8" height="0.8" fill="#356f9b"/></pattern></defs>
<polygon points="808.1,330 825,326.2 965,280 973.1,277.5 973.1,313.8 961.2,318.1 961.2,322.5 948.8,326.9 942.5,325 920,317.5 832.5,362.5 810.6,366.9" fill="#26485f" stroke="#0b1822" stroke-width="0.8" stroke-linejoin="round"/>
<polygon points="808.1,330 824.4,326 827.8,327.5 810.6,331.5" fill="#63c5fb" stroke="#0b1822" stroke-width="0.6" stroke-linejoin="round"/>
<polygon points="827.8,327.5 965,280.6 972.5,277.8 973.5,278.5 965.6,281.9 829.4,329" fill="#3a7fb0"/>
<polyline points="966.9,280 966.9,312.5" fill="none" stroke="#0b1822" stroke-width="0.6"/>
<polyline points="962.5,281.9 962.5,317.5" fill="none" stroke="#0b1822" stroke-width="0.6"/>
<polygon points="828.8,328.8 841.2,324.4 846.2,326.9 834.4,331.9" fill="#63c5fb" stroke="#0b1822" stroke-width="0.6" stroke-linejoin="round"/>
<polygon points="828.8,328.8 834.4,331.9 834.4,336.2 828.8,338.1" fill="#386f95" stroke="#0b1822" stroke-width="0.6" stroke-linejoin="round"/>
<polygon points="876.2,307.5 881.2,306.2 883.1,307.2 878.1,308.8" fill="#63c5fb" stroke="#0b1822" stroke-width="0.5" stroke-linejoin="round"/>
<polygon points="942.5,294.4 954.4,291 957.5,292.5 945.6,296.2" fill="#63c5fb" stroke="#0b1822" stroke-width="0.6" stroke-linejoin="round"/>
<polygon points="942.5,294.4 945.6,296.2 945.6,301.2 942.5,300" fill="#386f95" stroke="#0b1822" stroke-width="0.6" stroke-linejoin="round"/>
<polygon points="945.6,296.2 957.5,292.5 957.5,296.9 945.6,301.2" fill="#26485f" stroke="#0b1822" stroke-width="0.6" stroke-linejoin="round"/>
<polygon points="850,325.6 856.2,323.4 856.2,327.5 850,329.8" fill="#0d1c28" stroke="#3c86b8" stroke-width="0.5" stroke-linejoin="round"/>
<polygon points="860.6,321.9 866.9,319.6 866.9,323.8 860.6,326" fill="#0d1c28" stroke="#3c86b8" stroke-width="0.5" stroke-linejoin="round"/>
<polygon points="871.2,318.1 877.5,315.9 877.5,320 871.2,322.2" fill="#0d1c28" stroke="#3c86b8" stroke-width="0.5" stroke-linejoin="round"/>
<polygon points="942.5,318.8 948.8,322.5 948.8,326.9 942.5,325" fill="#386f95" stroke="#0b1822" stroke-width="0.6" stroke-linejoin="round"/>
<polygon points="828.1,343.8 835.6,350 835.6,365.6 831.2,362.5 828.1,357.5" fill="#386f95" stroke="#0b1822" stroke-width="0.6" stroke-linejoin="round"/>
<polygon points="835.6,350 850,357.5 850,360.6 835.6,365.6" fill="#26485f" stroke="#0b1822" stroke-width="0.6" stroke-linejoin="round"/>
<polygon points="828.1,340 992.5,285.6 1001.9,291.2 1001.2,293.8 920,318.1 845,343.8" fill="#63c5fb" stroke="#0b1822" stroke-width="0.7" stroke-linejoin="round"/>
<polygon points="926.2,318.8 1001.2,293.8 1000,296.9 930,321.2" fill="#1b3a50" stroke="#0b1822" stroke-width="0.5" stroke-linejoin="round"/>
<polygon points="921.2,317.5 1000,292.5 1001,293.8 926.2,319" fill="#07111a"/>
<polygon points="829,338.9 957.6,423.8 957.6,426.4 829,341.5" fill="#386f95" stroke="#0b1822" stroke-width="0.8" stroke-linejoin="round"/>
<polygon points="957.6,423.8 1129.9,362.8 1129.9,366 958.1,427.4" fill="#2f6a96" stroke="#0b1822" stroke-width="0.6" stroke-linejoin="round"/>
<polygon points="829,338.9 923.1,316.9 1019.9,374.7 1102.1,345.6 1129.9,362.8 957.6,423.8" fill="#5ec0f9" stroke="#0b1822" stroke-width="0.8" stroke-linejoin="round"/>
<polygon points="840.6,337.5 987.5,290.6 993.1,293.1 845.6,340.6" fill="#03080c"/>
<polyline points="828.1,340.2 992.5,285.8" fill="none" stroke="#0b1822" stroke-width="0.6"/>
<polygon points="944.4,405 1096.2,350 1120,363.1 966.2,419.4" fill="url(#mesh2)"/>
<polygon points="962.6,398.4 989.9,388.5 1012.4,402.5 984.7,412.6" fill="#000" opacity="0.55"/>
<polygon points="1008.2,381.9 1029.4,374.2 1052.3,387.9 1030.8,395.8" fill="#000" opacity="0.55"/>
<polygon points="1044.6,368.7 1065.9,361 1089.2,374.4 1067.7,382.2" fill="#000" opacity="0.55"/>
<polyline points="959.6,422.6 1127.9,361.2" fill="none" stroke="#17384f" stroke-width="0.7"/>
<polygon points="1243.1,302.5 1283.8,315 1315,333.8 1305.6,340 1274.4,324.4" fill="#000" opacity="0.18" filter="url(#bl2)"/>
<polygon points="1172.8,232.2 1181.4,235.3 1180.6,268.9 1170.9,262.7" fill="#386f95" stroke="#0b1822" stroke-width="0.7" stroke-linejoin="round"/>
<polygon points="1181.4,235.3 1187.7,233 1188.4,266.6 1180.6,268.9" fill="#26485f" stroke="#0b1822" stroke-width="0.7" stroke-linejoin="round"/>
<polygon points="1172.8,232.2 1179.8,229.4 1187.7,233 1181.4,235.3" fill="#63c5fb" stroke="#0b1822" stroke-width="0.6" stroke-linejoin="round"/>
<polyline points="1177.5,233.8 1177.2,250.9" fill="none" stroke="#0b1822" stroke-width="0.6"/>
<polyline points="1183.8,234.5 1183.4,261.9" fill="none" stroke="#0b1822" stroke-width="0.6"/>
<polygon points="1183.4,250.6 1283.8,294.4 1283.4,299.1 1183.1,254.8" fill="#386f95" stroke="#0b1822" stroke-width="0.6" stroke-linejoin="round"/>
<polygon points="1183.4,250.6 1187.7,247.5 1285.6,291.9 1283.8,294.4" fill="#63c5fb" stroke="#0b1822" stroke-width="0.6" stroke-linejoin="round"/>
<polygon points="1285.3,283.8 1311.1,294.7 1307.2,328.3 1279.1,315.8" fill="#386f95" stroke="#0b1822" stroke-width="0.7" stroke-linejoin="round"/>
<polygon points="1311.1,294.7 1318.1,291.6 1314.2,325.2 1307.2,328.3" fill="#26485f" stroke="#0b1822" stroke-width="0.7" stroke-linejoin="round"/>
<polygon points="1285.3,283.8 1291.6,280.3 1318.1,291.6 1311.1,294.7" fill="#63c5fb" stroke="#0b1822" stroke-width="0.6" stroke-linejoin="round"/>
<polygon points="1063.4,281.4 1069.7,280.2 1072.8,283.3 1072,286.1 1066.6,287.3 1063.4,284.8" fill="#386f95" stroke="#0b1822" stroke-width="0.5" stroke-linejoin="round"/>
<polygon points="1093.9,297.5 1100.2,296.2 1103.3,299.4 1102.5,302.2 1097,303.4 1093.9,300.9" fill="#386f95" stroke="#0b1822" stroke-width="0.5" stroke-linejoin="round"/>
<polygon points="1125.2,314.2 1131.4,313 1134.5,316.1 1133.8,318.9 1128.3,320.2 1125.2,317.7" fill="#386f95" stroke="#0b1822" stroke-width="0.5" stroke-linejoin="round"/>
<polygon points="1222.8,305.6 1228.3,304.1 1228.3,308.8 1224.4,309.5" fill="#26485f" stroke="#0b1822" stroke-width="0.5" stroke-linejoin="round"/>
<polygon points="1056.4,274.4 1158,326.7 1158,330.7 1056.4,278.4" fill="#386f95" stroke="#0b1822" stroke-width="0.8" stroke-linejoin="round"/>
<polygon points="1158,326.7 1231.9,299.4 1231.9,303.4 1158,330.7" fill="#26485f" stroke="#0b1822" stroke-width="0.8" stroke-linejoin="round"/>
<polygon points="1056.4,274.4 1129.1,249.1 1231.9,299.4 1158,326.7" fill="#5ec0f9" stroke="#0b1822" stroke-width="0.8" stroke-linejoin="round"/>
<polygon points="985,484.5 1153.1,418.2 1172.5,424.5 1010,492" fill="#000" opacity="0.18" filter="url(#bl2)"/>
<polygon points="988.1,432.5 1003.1,426.9 1009.4,431.2 993.1,437.5" fill="#63c5fb" stroke="#0b1822" stroke-width="0.6" stroke-linejoin="round"/>
<polygon points="988.1,432.5 993.1,437.5 993.1,441.9 988.1,440" fill="#386f95" stroke="#0b1822" stroke-width="0.6" stroke-linejoin="round"/>
<polygon points="1107.5,387.5 1121.2,381.9 1128.1,385.6 1112.5,390.6" fill="#63c5fb" stroke="#0b1822" stroke-width="0.6" stroke-linejoin="round"/>
<polygon points="1107.5,387.5 1112.5,390.6 1112.5,395 1107.5,392.5" fill="#386f95" stroke="#0b1822" stroke-width="0.6" stroke-linejoin="round"/>
<polygon points="983.1,444.8 1154.4,378.1 1153.1,415.6 983.1,483.8" fill="#26485f" stroke="#0b1822" stroke-width="0.8" stroke-linejoin="round"/>
<polygon points="979.4,443.1 983.1,444.8 983.1,483.8 980,483.1" fill="#386f95" stroke="#0b1822" stroke-width="0.7" stroke-linejoin="round"/>
<polygon points="979.4,443.1 991.2,439.4 994.4,441 983.1,444.8" fill="#63c5fb" stroke="#0b1822" stroke-width="0.6" stroke-linejoin="round"/>
<polygon points="993.8,441.2 1146.2,382.5 1147.5,385.6 993.8,444.4" fill="#1c3d55" stroke="#0b1822" stroke-width="0.5" stroke-linejoin="round"/>
<polygon points="993.8,441.2 1146.2,382.5 1146.2,383.5 993.8,442.2" fill="#3c86b8"/>
<polygon points="1053.1,415.2 1058.8,413.1 1060,415 1055,417.5" fill="#63c5fb" stroke="#0b1822" stroke-width="0.5" stroke-linejoin="round"/>
<polygon points="1060,416.9 1146.2,384.4 1146.9,387.5 1060,420.2" fill="#0a1620" stroke="#3c86b8" stroke-width="0.4" stroke-linejoin="round"/>
<polygon points="993.8,444.4 1053.1,419.8 1053.1,451.2 993.8,477.5" fill="url(#slat)" stroke="#0b1822" stroke-width="0.5" stroke-linejoin="round"/>
<polygon points="1419.5,400.9 1594.5,486.8 1603.9,483.7 1566.4,463.4" fill="#000" opacity="0.2" filter="url(#bl2)"/>
<polygon points="1419.8,385.2 1430.8,388.8 1433.9,372.2 1564.4,434.4 1561.2,450 1594.8,466.4 1590.9,482 1419.1,398.8" fill="#396e91" stroke="#0b1822" stroke-width="0.8" stroke-linejoin="round"/>
<polygon points="1433.9,372.2 1437.8,370.6 1568.8,431.6 1564.4,434.4" fill="#63c5fb" stroke="#0b1822" stroke-width="0.6" stroke-linejoin="round"/>
<polygon points="1419.8,385.2 1423.8,382.3 1432.3,386.2 1430.8,388.8" fill="#63c5fb" stroke="#0b1822" stroke-width="0.6" stroke-linejoin="round"/>
<polygon points="1561.2,450 1565.2,447.7 1599.1,464.1 1594.8,466.4" fill="#63c5fb" stroke="#0b1822" stroke-width="0.6" stroke-linejoin="round"/>
<polygon points="1564.4,434.4 1568.8,431.6 1565.2,447.7 1561.2,450" fill="#26485f" stroke="#0b1822" stroke-width="0.6" stroke-linejoin="round"/>
<polygon points="1594.8,466.4 1599.1,464.1 1595.2,480.9 1590.9,482" fill="#26485f" stroke="#0b1822" stroke-width="0.6" stroke-linejoin="round"/>
<polyline points="1419.4,395.6 1591.6,479.1" fill="none" stroke="#0b1822" stroke-width="0.7"/>
<polygon points="1419.4,395.6 1591.6,479.1 1590.9,482 1419.1,398.8" fill="#3f83b3"/>
<polyline points="1419.4,395.6 1591.6,479.1" fill="none" stroke="#0b1822" stroke-width="0.7"/>
<polygon points="1212.8,486.1 1385,592.9 1389.9,595.9 1541.3,516.8 1548.3,524.7 1389.9,603.8 1211.8,493" fill="#000" opacity="0.2" filter="url(#bl2)"/>
<polygon points="1210.8,473.2 1362.2,407.3 1365.2,408.9 1364.2,421.7 1357.2,424.7 1215.7,486 1210.8,483.1" fill="#26485f" stroke="#0b1822" stroke-width="0.8" stroke-linejoin="round"/>
<polygon points="1210.8,473.2 1362.2,407.3 1365.2,408.9 1215.7,476.1" fill="#63c5fb" stroke="#0b1822" stroke-width="0.6" stroke-linejoin="round"/>
<polygon points="1210.8,473.2 1215.7,476.1 1215.7,486 1210.8,483.1" fill="#386f95" stroke="#0b1822" stroke-width="0.6" stroke-linejoin="round"/>
<polygon points="1249.4,461.3 1278.1,448.8 1278.1,455.4 1249.4,468.2" fill="url(#mesh2)"/>
<polygon points="1215.7,485.6 1357.2,422.7 1510.6,500.9 1498.8,509.8 1506.7,513.8 1389.9,576.1 1383,585.4" fill="#5ec0f9" stroke="#0b1822" stroke-width="0.8" stroke-linejoin="round"/>
<polygon points="1210.8,483.1 1215.7,485.6 1383,585.4 1384.9,574.1 1387.9,578.1 1387.9,592.9 1383,589.9" fill="#3f83b3" stroke="#0b1822" stroke-width="0.7" stroke-linejoin="round"/>
<polyline points="1213.8,484.5 1384.9,588" fill="none" stroke="#1d4a6b" stroke-width="0.6"/>
<polygon points="1337.4,422.7 1348.3,417.2 1357.2,421.1 1346.4,427.1" fill="#63c5fb" stroke="#0b1822" stroke-width="0.6" stroke-linejoin="round"/>
<polygon points="1337.4,422.7 1346.4,427.1 1346.4,435.6 1342.4,435.6 1337.4,431.6" fill="#386f95" stroke="#0b1822" stroke-width="0.6" stroke-linejoin="round"/>
<polygon points="1346.4,427.1 1357.2,421.1 1356.3,430.6 1346.4,435.6" fill="#26485f" stroke="#0b1822" stroke-width="0.6" stroke-linejoin="round"/>
<polygon points="1348.3,417.2 1362.2,410.4 1364.2,411.8 1357.2,421.1" fill="#26485f" stroke="#0b1822" stroke-width="0.5" stroke-linejoin="round"/>
<circle cx="1346.4" cy="419.7" r="1" fill="#10293a"/>
<circle cx="1239.5" cy="477.1" r="1.1" fill="#10293a"/>
<polygon points="1387.9,578.1 1541.9,498.3 1539.3,513.8 1387.9,592.9" fill="#26485f" stroke="#0b1822" stroke-width="0.8" stroke-linejoin="round"/>
<polygon points="1398.8,576.1 1535.4,504.8 1534.4,513.8 1398.8,586" fill="url(#mesh2)"/>
<polygon points="1384.9,574.1 1540.3,495.9 1542.3,498.3 1387.9,578.1" fill="#63c5fb" stroke="#0b1822" stroke-width="0.6" stroke-linejoin="round"/>
<polygon points="1498.8,509.4 1510.6,501.9 1520.9,505.8 1506.7,513.8" fill="#63c5fb" stroke="#0b1822" stroke-width="0.6" stroke-linejoin="round"/>
<polygon points="1498.8,509.4 1506.7,513.8 1506.7,516.1 1498.8,514.7" fill="#386f95" stroke="#0b1822" stroke-width="0.5" stroke-linejoin="round"/>
<circle cx="1511.6" cy="504.8" r="1" fill="#10293a"/>
<polygon points="1130.7,508 1310.4,620.5 1342.3,613.4 1356.5,595.7 1179.4,507.1" fill="#000" opacity="0.2" filter="url(#bl2)"/>
<polygon points="1322.5,595.9 1333.3,590.2 1342.3,595.4 1321,606.3" fill="#63c5fb" stroke="#0b1822" stroke-width="0.6" stroke-linejoin="round"/>
<polygon points="1321,606.3 1342.3,595.4 1341.1,607.7 1312,622.6 1310.4,616.5 1308.2,616.2 1316.8,610.6 1320.1,608.4" fill="#26485f" stroke="#0b1822" stroke-width="0.6" stroke-linejoin="round"/>
<circle cx="1331.5" cy="597.3" r="1.1" fill="#10293a"/>
<polygon points="1146.6,465.1 1158.1,460.6 1336.2,567 1328.6,570.3 1323.4,572.7" fill="#63c5fb" stroke="#0b1822" stroke-width="0.7" stroke-linejoin="round"/>
<polygon points="1167,463.8 1169.1,462.9 1334.3,567.8 1330.3,569.6" fill="#12283a"/>
<polyline points="1159.9,463.3 1328.6,570.3" fill="none" stroke="#0b1822" stroke-width="0.6"/>
<polygon points="1133.3,466.8 1142.2,464.2 1321,573.6 1313,577.4" fill="#63c5fb" stroke="#0b1822" stroke-width="0.7" stroke-linejoin="round"/>
<polygon points="1142.2,464.2 1146.6,465.1 1323.4,572.7 1321,573.6" fill="#3a7fb0" stroke="#0b1822" stroke-width="0.5" stroke-linejoin="round"/>
<polygon points="1313,577.4 1321,573.6 1323.4,572.7 1328.6,570.3 1336.2,567 1336.4,571.3 1333.3,574.6 1325.8,578.4 1323.4,589.3 1322,593 1320.1,608.2 1316.8,610.6 1308.2,616.2" fill="#26485f" stroke="#0b1822" stroke-width="0.7" stroke-linejoin="round"/>
<polyline points="1321,573.6 1316.8,610.6" fill="none" stroke="#0b1822" stroke-width="0.6"/>
<polygon points="1133.3,466.8 1313,577.4 1308.2,616.2 1310.4,616.5 1144,512 1144,509.3 1130.7,504" fill="#396e91" stroke="#0b1822" stroke-width="0.8" stroke-linejoin="round"/>
<polyline points="1144,509.3 1307.8,614.8" fill="none" stroke="#0b1822" stroke-width="0.6"/>
<circle cx="1145.4" cy="510.2" r="1.1" fill="none" stroke="#10293a" stroke-width="0.5"/>
<circle cx="1215.7" cy="554.8" r="1.1" fill="none" stroke="#10293a" stroke-width="0.5"/>
<circle cx="1292.6" cy="603.6" r="1.1" fill="none" stroke="#10293a" stroke-width="0.5"/>
<polygon points="1044.5,546.5 1224.5,671.5 1242,663 1264,656 1082,532" fill="#000" opacity="0.2" filter="url(#bl2)"/>
<polygon points="1222.5,667.5 1233.8,661.9 1233.1,673.1 1227.5,675.6 1222.5,673" fill="#386f95" stroke="#0b1822" stroke-width="0.6" stroke-linejoin="round"/>
<polygon points="1055,551 1060,554 1060,559 1055,556" fill="#386f95" stroke="#0b1822" stroke-width="0.5" stroke-linejoin="round"/>
<polygon points="1047.5,531.5 1219.4,653.1 1221.2,639.6 1049,519.5" fill="#63c5fb" stroke="#0b1822" stroke-width="0.6" stroke-linejoin="round"/>
<polyline points="1048.3,525.5 1220.4,646.6" fill="none" stroke="#06121a" stroke-width="1.3"/>
<polyline points="1048.8,521.5 1220.9,641.8" fill="none" stroke="#1d4a6b" stroke-width="0.6"/>
<polygon points="1046.5,507.2 1061.2,517.5 1060.6,536.5 1047.5,531.5" fill="#26485f" stroke="#0b1822" stroke-width="0.6" stroke-linejoin="round"/>
<path d="M1043.9 501.4L1226.3 624.4L1222.5 667.5L1042.5 542.5Z M1046.5 507.2L1047.5 531.5L1219.4 653.1L1222.6 628.8Z" fill="#396e91" fill-rule="evenodd" stroke="#0b1822" stroke-width="0.7" stroke-linejoin="round"/>
<polyline points="1044,537 1222.6,662" fill="none" stroke="#1d4a6b" stroke-width="0.5"/>
<polygon points="1226.3,624.4 1244.6,614.6 1240,658.8 1222.5,667.5" fill="#26485f" stroke="#0b1822" stroke-width="0.7" stroke-linejoin="round"/>
<polygon points="1043.9,501.4 1059.8,492.5 1244.6,614.6 1226.3,624.4" fill="#63c5fb" stroke="#0b1822" stroke-width="0.7" stroke-linejoin="round"/>
<polygon points="918.2,590.5 952.6,616.8 1014.5,655.5 1027,650.5 964.5,613" fill="#000" opacity="0.15" filter="url(#bl2)"/>
<polygon points="1012.6,668 1114.5,744.9 1134.5,739.2 1074.5,698" fill="#000" opacity="0.15" filter="url(#bl2)"/>
<polygon points="915.6,560.6 923.8,554.6 959.4,577.1 951.2,583.1" fill="#63c5fb" stroke="#0b1822" stroke-width="0.6" stroke-linejoin="round"/>
<polygon points="951.2,583.1 959.4,577.1 958.8,607.8 950.6,613.8" fill="#26485f" stroke="#0b1822" stroke-width="0.6" stroke-linejoin="round"/>
<polygon points="915.6,560.6 951.2,583.1 950.6,613.8 916.2,587.5" fill="url(#slat2)" stroke="#0b1822" stroke-width="0.6" stroke-linejoin="round"/>
<polyline points="918.8,558.5 954,582.2" fill="none" stroke="#0b1822" stroke-width="0.5"/>
<polyline points="921.5,556.5 956.5,581" fill="none" stroke="#0b1822" stroke-width="0.5"/>
<polygon points="973.8,620 990,630 990,635 973.8,625" fill="#3a7fb0" stroke="#0b1822" stroke-width="0.5" stroke-linejoin="round"/>
<polygon points="956.9,590.6 965,585.6 1013.1,621.2 1006.2,626.2" fill="#63c5fb" stroke="#0b1822" stroke-width="0.6" stroke-linejoin="round"/>
<polyline points="960,588.8 1009,624.4" fill="none" stroke="#0b1822" stroke-width="0.5"/>
<polygon points="1006.2,626.2 1013.1,621.2 1011.9,652.5 1005.6,656.2" fill="#26485f" stroke="#0b1822" stroke-width="0.6" stroke-linejoin="round"/>
<polygon points="956.9,591.2 1006.2,626.2 1005.6,656.2 989.4,646.2 988.8,633.1 973.8,623.8 973.8,630 956.9,620" fill="#396e91" stroke="#0b1822" stroke-width="0.6" stroke-linejoin="round"/>
<polygon points="976.2,608.1 989,616.9 989,627.5 976.2,618.8" fill="#dfeaee" stroke="#0b1822" stroke-width="0.5" stroke-linejoin="round"/>
<polygon points="960,598.8 973.8,606.9 975,610 975,626.2 971.2,628.8 970,612.5 960,606.9" fill="#2f628a" stroke="#0b1822" stroke-width="0.5" stroke-linejoin="round"/>
<polygon points="960,598.8 962.5,597.5 976.2,605.6 973.8,606.9" fill="#63c5fb" stroke="#0b1822" stroke-width="0.4" stroke-linejoin="round"/>
<polygon points="990.6,626.2 1000,631.9 1000,635 990.6,629.4" fill="#2f628a" stroke="#0b1822" stroke-width="0.4" stroke-linejoin="round"/>
<polygon points="960.6,618.1 963.8,620 963.8,621.9 960.6,620" fill="#10293a"/>
<polygon points="1028.1,664.4 1044.3,674.4 1044.3,679.4 1028.1,669.4" fill="#3a7fb0" stroke="#0b1822" stroke-width="0.5" stroke-linejoin="round"/>
<polygon points="1011.2,635 1019.4,630 1067.5,665.6 1060.6,670.6" fill="#63c5fb" stroke="#0b1822" stroke-width="0.6" stroke-linejoin="round"/>
<polyline points="1014.4,633.1 1063.3,668.7" fill="none" stroke="#0b1822" stroke-width="0.5"/>
<polygon points="1060.6,670.6 1067.5,665.6 1066.2,696.9 1060,700.6" fill="#26485f" stroke="#0b1822" stroke-width="0.6" stroke-linejoin="round"/>
<polygon points="1011.2,635.6 1060.6,670.6 1060,700.6 1043.7,690.6 1043.1,677.5 1028.1,668.1 1028.1,674.4 1011.2,664.4" fill="#396e91" stroke="#0b1822" stroke-width="0.6" stroke-linejoin="round"/>
<polygon points="1030.6,652.5 1043.3,661.2 1043.3,671.9 1030.6,663.1" fill="#dfeaee" stroke="#0b1822" stroke-width="0.5" stroke-linejoin="round"/>
<polygon points="1014.4,643.1 1028.1,651.2 1029.3,654.4 1029.3,670.6 1025.6,673.1 1024.3,656.9 1014.4,651.2" fill="#2f628a" stroke="#0b1822" stroke-width="0.5" stroke-linejoin="round"/>
<polygon points="1014.4,643.1 1016.9,641.9 1030.6,650 1028.1,651.2" fill="#63c5fb" stroke="#0b1822" stroke-width="0.4" stroke-linejoin="round"/>
<polygon points="1045,670.6 1054.3,676.2 1054.3,679.4 1045,673.7" fill="#2f628a" stroke="#0b1822" stroke-width="0.4" stroke-linejoin="round"/>
<polygon points="1015,662.5 1018.1,664.4 1018.1,666.2 1015,664.4" fill="#10293a"/>
<polygon points="1070,678.1 1078.5,671.6 1122.9,706 1114.4,712.5" fill="#63c5fb" stroke="#0b1822" stroke-width="0.6" stroke-linejoin="round"/>
<polygon points="1114.4,712.5 1122.9,706 1121,735.4 1112.5,741.9" fill="#26485f" stroke="#0b1822" stroke-width="0.6" stroke-linejoin="round"/>
<polygon points="1070,678.1 1114.4,712.5 1112.5,741.9 1068.1,708.1" fill="#396e91" stroke="#0b1822" stroke-width="0.6" stroke-linejoin="round"/>
<polyline points="1073.1,676 1117.2,710" fill="none" stroke="#0b1822" stroke-width="0.5"/>
<polyline points="1076.2,674 1120,707.5" fill="none" stroke="#0b1822" stroke-width="0.5"/>
<ellipse cx="1075.6" cy="691.2" rx="1.6" ry="1.1" fill="#10293a" transform="rotate(35 1075.6 691.2)"/>
<ellipse cx="1075" cy="700" rx="1.6" ry="1.1" fill="#10293a" transform="rotate(35 1075 700)"/>
<ellipse cx="1075" cy="708.8" rx="1.6" ry="1.1" fill="#10293a" transform="rotate(35 1075 708.8)"/>
<ellipse cx="1090" cy="701.9" rx="1.6" ry="1.1" fill="#10293a" transform="rotate(35 1090 701.9)"/>
<polygon points="1094.4,705 1105.6,712.8 1105,719.8 1094.4,711.9" fill="#1b3a50" stroke="#0b1822" stroke-width="0.5" stroke-linejoin="round"/>
<polygon points="1095.6,712.5 1101.2,710 1105,716.2 1105,719.4" fill="#63c5fb"/>
<polygon points="1085.6,655 1090,653.1 1126.9,681.2 1126.2,690 1121.2,693.8 1085,663.8" fill="#141414"/>
<polygon points="1088.8,663.8 1098.8,670 1098.8,675 1095,676.9 1088.8,671.2" fill="#262626"/>
<polygon points="1108.8,678.8 1120,686.2 1119.4,690.6 1115,691.9 1108.1,686.2" fill="#262626"/>
<polygon points="1021.9,616.9 1027.5,620 1027.5,625 1021.9,621.9" fill="#386f95" stroke="#0b1822" stroke-width="0.5" stroke-linejoin="round"/>
<polygon points="1021.9,616.9 1025.6,615 1030.6,617.8 1027.5,620" fill="#63c5fb" stroke="#0b1822" stroke-width="0.5" stroke-linejoin="round"/>
<polygon points="1027.5,620 1030.6,617.8 1034.4,616.2 1034.4,623.1 1030.6,625 1027.5,625" fill="#3a7fb0" stroke="#0b1822" stroke-width="0.5" stroke-linejoin="round"/>
<polygon points="1026.9,612.5 1030.6,611.2 1034.4,613.5 1034.4,616.2 1030.6,617.8 1026.9,615" fill="#63c5fb" stroke="#0b1822" stroke-width="0.5" stroke-linejoin="round"/>
<polygon points="1034.8,627.1 1040.4,630.2 1040.4,635.2 1034.8,632.1" fill="#386f95" stroke="#0b1822" stroke-width="0.5" stroke-linejoin="round"/>
<polygon points="1034.8,627.1 1038.5,625.2 1043.5,628 1040.4,630.2" fill="#63c5fb" stroke="#0b1822" stroke-width="0.5" stroke-linejoin="round"/>
<polygon points="1040.4,630.2 1043.5,628 1047.2,626.5 1047.2,633.4 1043.5,635.2 1040.4,635.2" fill="#3a7fb0" stroke="#0b1822" stroke-width="0.5" stroke-linejoin="round"/>
<polygon points="1039.8,622.8 1043.5,621.5 1047.2,623.8 1047.2,626.5 1043.5,628 1039.8,625.2" fill="#63c5fb" stroke="#0b1822" stroke-width="0.5" stroke-linejoin="round"/>
<polygon points="1066.9,650.9 1072.5,654 1072.5,659 1066.9,655.9" fill="#386f95" stroke="#0b1822" stroke-width="0.5" stroke-linejoin="round"/>
<polygon points="1066.9,650.9 1070.6,649 1075.6,651.8 1072.5,654" fill="#63c5fb" stroke="#0b1822" stroke-width="0.5" stroke-linejoin="round"/>
<polygon points="1072.5,654 1075.6,651.8 1079.4,650.2 1079.4,657.1 1075.6,659 1072.5,659" fill="#3a7fb0" stroke="#0b1822" stroke-width="0.5" stroke-linejoin="round"/>
<polygon points="1071.9,646.5 1075.6,645.2 1079.4,647.5 1079.4,650.2 1075.6,651.8 1071.9,649" fill="#63c5fb" stroke="#0b1822" stroke-width="0.5" stroke-linejoin="round"/>
<polygon points="1066.9,650.9 1072.5,654 1072.5,659 1066.9,655.9" fill="#386f95" stroke="#0b1822" stroke-width="0.5" stroke-linejoin="round"/>
<polygon points="1066.9,650.9 1070.6,649 1075.6,651.8 1072.5,654" fill="#63c5fb" stroke="#0b1822" stroke-width="0.5" stroke-linejoin="round"/>
<polygon points="1072.5,654 1075.6,651.8 1079.4,650.2 1079.4,657.1 1075.6,659 1072.5,659" fill="#3a7fb0" stroke="#0b1822" stroke-width="0.5" stroke-linejoin="round"/>
<polygon points="1071.9,646.5 1075.6,645.2 1079.4,647.5 1079.4,650.2 1075.6,651.8 1071.9,649" fill="#63c5fb" stroke="#0b1822" stroke-width="0.5" stroke-linejoin="round"/>
<polygon points="1004.4,605 1010,610 1017.5,613.8 1020.6,611.9 1020.6,605.6 1010,597.5 1005.6,599.4" fill="#3a7fb0" stroke="#0b1822" stroke-width="0.5" stroke-linejoin="round"/>
<polygon points="1005.6,599.4 1010,597.5 1020.6,605.6 1016.2,607.5" fill="#63c5fb" stroke="#0b1822" stroke-width="0.5" stroke-linejoin="round"/>
<polygon points="985,586.2 990,583.1 1000,588.8 999.4,595 991.9,598.1 990,595 985.6,593.8" fill="#9aa0a4" stroke="#0b1822" stroke-width="0.5" stroke-linejoin="round"/>
<polygon points="986.2,585 992.5,579.8 998.8,583.1 998.1,588.8 991.2,591.2" fill="#f4f4f4" stroke="#0b1822" stroke-width="0.5" stroke-linejoin="round"/>
<polygon points="991.9,590.6 998.8,588.1 999.4,595 992.5,597.8" fill="#c9cdd0" stroke="#0b1822" stroke-width="0.4" stroke-linejoin="round"/>
<polygon points="1050.6,637.5 1056.2,630.6 1067.5,636.2 1066.9,647.5 1060,651.2 1051.2,646.2" fill="#6c777d" stroke="#0b1822" stroke-width="0.5" stroke-linejoin="round"/>
<polygon points="1050.6,637.5 1056.2,630.6 1067.5,636.2 1061.2,640" fill="#8b979d" stroke="#0b1822" stroke-width="0.4" stroke-linejoin="round"/>
<polygon points="1050.6,638.8 1056.9,631.9 1067.5,636.9 1066.9,648.1 1060,651.2 1051.2,646.9" fill="#6c777d" stroke="#0b1822" stroke-width="0.5" stroke-linejoin="round"/>
<polygon points="1050.6,638.8 1056.9,631.9 1067.5,636.9 1061.2,641.2" fill="#8b979d" stroke="#0b1822" stroke-width="0.4" stroke-linejoin="round"/>
<polygon points="1040.4,576.6 1044.8,571.6 1051,574.1 1051.6,579.1 1047.2,580.4 1045.4,583.5 1041,582.2" fill="#b61e3a" stroke="#5e0f1e" stroke-width="0.5" stroke-linejoin="round"/>
<polygon points="1040.4,576.6 1044.8,571.6 1047.9,573.5 1043.5,577.9" fill="#cf3853"/>
<polygon points="1051,581.6 1069.8,592.2 1070.4,607.2 1051,596" fill="#386f95" stroke="#0b1822" stroke-width="0.6" stroke-linejoin="round"/>
<polygon points="1051,581.6 1059.8,573.5 1079.1,586 1069.8,592.2" fill="#63c5fb" stroke="#0b1822" stroke-width="0.6" stroke-linejoin="round"/>
<polyline points="1055.4,577.5 1074.1,589.5" fill="none" stroke="#0b1822" stroke-width="0.5"/>
<polygon points="1069.8,592.2 1079.1,586 1080.4,589.8 1079.8,604.1 1070.4,607.2" fill="#2f628a" stroke="#0b1822" stroke-width="0.6" stroke-linejoin="round"/>
<polyline points="1074.8,589.8 1074.8,605.4" fill="none" stroke="#0b1822" stroke-width="0.5"/>
<polyline points="1077.2,588.5 1077.2,604.8" fill="none" stroke="#0b1822" stroke-width="0.5"/>
<polygon points="1096.2,617.1 1100.6,612.1 1106.9,614.6 1107.5,619.6 1103.1,620.9 1101.2,624 1096.9,622.8" fill="#b61e3a" stroke="#5e0f1e" stroke-width="0.5" stroke-linejoin="round"/>
<polygon points="1096.2,617.1 1100.6,612.1 1103.8,614 1099.4,618.4" fill="#cf3853"/>
<polygon points="1106.9,622.1 1125.6,632.8 1126.2,647.8 1106.9,636.5" fill="#386f95" stroke="#0b1822" stroke-width="0.6" stroke-linejoin="round"/>
<polygon points="1106.9,622.1 1115.6,614 1135,626.5 1125.6,632.8" fill="#63c5fb" stroke="#0b1822" stroke-width="0.6" stroke-linejoin="round"/>
<polyline points="1111.2,618 1130,630" fill="none" stroke="#0b1822" stroke-width="0.5"/>
<polygon points="1125.6,632.8 1135,626.5 1136.2,630.2 1135.6,644.6 1126.2,647.8" fill="#2f628a" stroke="#0b1822" stroke-width="0.6" stroke-linejoin="round"/>
<polyline points="1130.6,630.2 1130.6,645.9" fill="none" stroke="#0b1822" stroke-width="0.5"/>
<polyline points="1133.1,629 1133.1,645.2" fill="none" stroke="#0b1822" stroke-width="0.5"/>
<polygon points="1095.9,617.1 1100.2,612.1 1106.5,614.6 1107.1,619.6 1102.8,620.9 1100.9,624 1096.5,622.8" fill="#b61e3a" stroke="#5e0f1e" stroke-width="0.5" stroke-linejoin="round"/>
<polygon points="1095.9,617.1 1100.2,612.1 1103.4,614 1099,618.4" fill="#cf3853"/>
<polygon points="1106.5,622.1 1125.2,632.8 1125.9,647.8 1106.5,636.5" fill="#386f95" stroke="#0b1822" stroke-width="0.6" stroke-linejoin="round"/>
<polygon points="1106.5,622.1 1115.2,614 1134.6,626.5 1125.2,632.8" fill="#63c5fb" stroke="#0b1822" stroke-width="0.6" stroke-linejoin="round"/>
<polyline points="1110.9,618 1129.6,630" fill="none" stroke="#0b1822" stroke-width="0.5"/>
<polygon points="1125.2,632.8 1134.6,626.5 1135.9,630.2 1135.2,644.6 1125.9,647.8" fill="#2f628a" stroke="#0b1822" stroke-width="0.6" stroke-linejoin="round"/>
<polyline points="1130.2,630.2 1130.2,645.9" fill="none" stroke="#0b1822" stroke-width="0.5"/>
<polyline points="1132.8,629 1132.8,645.2" fill="none" stroke="#0b1822" stroke-width="0.5"/>
<polygon points="1158.8,645.6 1163.1,640.6 1170.6,643.1 1170.6,648.8 1166.2,650.6 1165.6,648.8 1160.6,650.6" fill="#b61e3a" stroke="#5e0f1e" stroke-width="0.5" stroke-linejoin="round"/>
<polygon points="1158.8,645.6 1163.1,640.6 1166.2,641.9 1161.9,646.9" fill="#cf3853"/>
<polygon points="1156.2,655.6 1160.6,650.6 1168.1,653.1 1168.1,658.8 1163.8,660.6 1163.1,658.8 1158.1,660.6" fill="#b61e3a" stroke="#5e0f1e" stroke-width="0.5" stroke-linejoin="round"/>
<polygon points="1156.2,655.6 1160.6,650.6 1163.8,651.9 1159.4,656.9" fill="#cf3853"/>
<polygon points="1155,664.4 1159.4,659.4 1166.9,661.9 1166.9,667.5 1162.5,669.4 1161.9,667.5 1156.9,669.4" fill="#b61e3a" stroke="#5e0f1e" stroke-width="0.5" stroke-linejoin="round"/>
<polygon points="1155,664.4 1159.4,659.4 1162.5,660.6 1158.1,665.6" fill="#cf3853"/>
<polygon points="1171.2,655.6 1175.6,650.6 1183.1,653.1 1183.1,658.8 1178.8,660.6 1178.1,658.8 1173.1,660.6" fill="#b61e3a" stroke="#5e0f1e" stroke-width="0.5" stroke-linejoin="round"/>
<polygon points="1171.2,655.6 1175.6,650.6 1178.8,651.9 1174.4,656.9" fill="#cf3853"/>
<polygon points="1183.1,671.2 1190.6,665.6 1201.9,671.2 1194.4,676.9" fill="#63c5fb" stroke="#0b1822" stroke-width="0.6" stroke-linejoin="round"/>
<polygon points="1194.4,676.9 1201.9,671.2 1201.9,678.8 1194.4,684.4" fill="#26485f" stroke="#0b1822" stroke-width="0.6" stroke-linejoin="round"/>
<polygon points="1183.1,671.2 1194.4,676.9 1194.4,684.4 1183.8,678.1" fill="#386f95" stroke="#0b1822" stroke-width="0.6" stroke-linejoin="round"/>
<polygon points="1190,660.6 1207.5,670 1206.9,680 1201.9,683.1 1201.9,673.1 1188.8,666.2" fill="#3a7fb0" stroke="#0b1822" stroke-width="0.5" stroke-linejoin="round"/>
<polygon points="1190,660.6 1192.5,659.4 1207.5,670 1205,671.2" fill="#63c5fb" stroke="#0b1822" stroke-width="0.5" stroke-linejoin="round"/>
</svg></div>
<div class="abs" id="topblack"></div>
<div class="abs" id="title"><svg class="abs" style="left:2px;top:4px" width="18" height="14" viewBox="0 0 18 14"><polygon points="0,1 16,1 9,13" fill="#1aa3d6"/><polygon points="0,1 9,13 7,4.5" fill="#0d6b94"/></svg><div class="abs t">FM77AV_001_open</div>
<svg class="abs" style="left:1790px;top:0" width="130" height="23" viewBox="1790 8 130 23"><path d="M1799 18.5h10M1845.5 15.5h7v7h-7zM1847.5 15.5v-2h7v7h-2M1890 13.5l10 10M1900 13.5l-10 10" stroke="#111" stroke-width="1.1" fill="none"/></svg>
</div>
<div class="abs" id="toolbar"></div>
<svg class="abs" style="left:0;top:31px" width="1920" height="59" viewBox="0 31 1920 59">
<defs>
<linearGradient id="lg" x1="0" y1="0" x2="0" y2="1"><stop offset="0" stop-color="#c9d8de"/><stop offset="1" stop-color="#8aaab9"/></linearGradient>
<g id="cb"><polygon points="8,0 16,4 8,8 0,4" fill="#fff" stroke="#555" stroke-width="0.6"/><polygon points="0,4 8,8 8,18 0,14" fill="#6e6e6e"/><polygon points="16,4 8,8 8,18 16,14" fill="#2b2b2b"/></g>
<g id="dd"><polygon points="1.500,5 5,5 5,1.500" fill="#a0a0a0"/></g>
</defs>
<rect x="8" y="39.500" width="43.500" height="43" rx="7" fill="url(#lg)"/>
<polygon points="46,50 51.500,55 51.500,78 46,82.500 36,82.500 30,76" fill="#5f8fa5" opacity="0.600"/>
<polygon points="13.500,50.500 46,49.500 30,57.500" fill="#9bdcf3"/><polygon points="13.500,50.500 30,57.500 30,76" fill="#1a9fd6"/><polygon points="46,49.500 30,57.500 30,76" fill="#0c6c96"/>
<path d="M199 62l6 4.500 6-4.500" stroke="#222" stroke-width="2.200" fill="none"/>
<!-- undo redo -->
<path d="M635 62c-2-5-7-6.500-12-6v-3.500l-8 5.500 8 5.500v-3.500c4-0.500 8 0 12 2z" fill="#bdbdbd"/>
<path d="M657.500 62c2-5 7-6.500 12-6v-3.500l8 5.500-8 5.500v-3.500c-4-0.500-8 0-12 2z" fill="#bdbdbd"/>
<path d="M710.500 47v25M796.500 47v25M1269.500 47v25" stroke="#b4b4b4" stroke-width="1"/>
<!-- select -->
<rect x="744.500" y="49.500" width="20" height="20" fill="none" stroke="#222" stroke-width="1" stroke-dasharray="1 1.200"/>
<use href="#cb" transform="translate(747,54.500) scale(0.75)"/>
<path d="M761.500 46.500v8M757.500 50.500h8" stroke="#222" stroke-width="1" fill="none"/><polygon points="761.500,44.500 759.700,47 763.300,47" fill="#222"/><polygon points="761.500,56.500 759.700,54 763.300,54" fill="#222"/><polygon points="755.500,50.500 758,48.700 758,52.300" fill="#222"/><polygon points="767.500,50.500 765,48.700 765,52.300" fill="#222"/>
<!-- primitives -->
<circle cx="845" cy="54.500" r="6.500" fill="#fff" stroke="#444" stroke-width="0.9"/>
<use href="#cb" transform="translate(829,52)"/>
<!-- sketch -->
<path d="M884 53c-6-3.500-12-1-10.500 5 1 4 3 7 6.500 8.500" stroke="#333" stroke-width="1" fill="none"/><circle cx="883" cy="53" r="2" fill="#222"/><circle cx="876" cy="63" r="2" fill="#222"/>
<polygon points="892,48 896,51.500 885,63.500 880,66.500 882,60.500" fill="#2b2b2b"/>
<!-- construct -->
<use href="#cb" transform="translate(918,52)"/><path d="M927 56l7-9" stroke="#2b2b2b" stroke-width="2.600"/>
<!-- transform -->
<use href="#cb" transform="translate(958,52)"/><path d="M975.500 48v8h7" stroke="#222" stroke-width="1.100" fill="none"/><polygon points="975.500,45 973.300,48.800 977.700,48.800" fill="#222"/><polygon points="985,56 981.200,53.800 981.200,58.200" fill="#222"/>
<!-- pattern -->
<use href="#cb" transform="translate(1003,49.500) scale(0.5)"/><use href="#cb" transform="translate(1013,49.500) scale(0.5)"/><use href="#cb" transform="translate(1003,60) scale(0.5)"/><use href="#cb" transform="translate(1013,60) scale(0.5)"/>
<!-- grouping -->
<circle cx="1059.500" cy="56" r="5.500" fill="#fff" stroke="#444" stroke-width="0.9"/><use href="#cb" transform="translate(1047,56) scale(0.72)"/>
<path d="M1045.500 49.500h1.500M1045.500 49.500v1.500M1066.500 49.500h-1.500M1066.500 49.500v1.500M1045.500 70h1.500M1045.500 70v-1.500M1066.500 70h-1.500M1066.500 70v-1.500" stroke="#222" stroke-width="1.300"/>
<!-- combine -->
<use href="#cb" transform="translate(1089,51) scale(1.25,1)"/><path d="M1103 51.500l6 3-10 5" stroke="#555" stroke-width="0.700" fill="none"/>
<!-- measure -->
<use href="#cb" transform="translate(1131,49) scale(1.100,1.150)"/><rect x="1146.500" y="49.500" width="5" height="20" fill="#fff" stroke="#222" stroke-width="1"/><path d="M1149 52h2.500M1149 55h2.500M1149 58h2.500M1149 61h2.500M1149 64h2.500M1149 67h2.500" stroke="#222" stroke-width="0.700"/>
<!-- text -->
<path d="M1175 51h18v4.500h-6.200v14.500h-5.600v-14.500h-6.200z" fill="#2b2b2b"/>
<!-- magnet -->
<g transform="translate(1229,57.500) rotate(45)"><path d="M-9 9v-8a9 9 0 0 1 18 0v8h-5.500v-8a3.500 3.500 0 0 0 -7 0v8z" fill="#fff" stroke="#444" stroke-width="1"/><rect x="-9" y="5.500" width="5.500" height="4.500" fill="#2b2b2b"/><rect x="3.500" y="5.500" width="5.500" height="4.500" fill="#2b2b2b"/></g>
<!-- materials -->
<g><polygon points="1313,48.500 1323.500,53 1313,57.500 1302.500,53" fill="#fff" stroke="#333" stroke-width="0.800"/><path d="M1302.500 55.500l10.500 4.500M1302.500 58l10.500 4.500M1302.500 60.500l10.500 4.500M1302.500 63l10.500 4.500M1302.500 65.500l10.500 4.500" stroke="#2b2b2b" stroke-width="1.500"/><path d="M1314 60l9-7M1314.500 63.500l9-8M1315 67l8.500-8.500M1317 69l6.500-6.500M1320 68l3.500-3" stroke="#2b2b2b" stroke-width="1.300"/></g>
<use href="#dd" x="770" y="79"/><use href="#dd" x="856" y="79"/><use href="#dd" x="899" y="79"/><use href="#dd" x="942" y="79"/><use href="#dd" x="985" y="79"/><use href="#dd" x="1028" y="79"/><use href="#dd" x="1071" y="79"/><use href="#dd" x="1114" y="79"/>
</svg>
<div class="abs" id="brand1">AUTODESK<span style="font-size:7px;vertical-align:6px">®</span></div>
<div class="abs" id="brand2">123D<span style="font-size:7px;vertical-align:6px">®</span> DESIGN</div>
<div class="abs btn" id="b1"><div class="a">プレミアム版登録</div><div class="b">(商業利用向け)</div></div>
<div class="abs btn" id="b2">サインイン</div>
<div class="abs" id="b3">?</div>
<div class="abs" id="vscroll"></div><div class="abs" id="vthumb"><svg class="abs" style="left:0;top:66px" width="8" height="16"><polygon points="7,2 7,14 1,8" fill="#fff"/></svg></div>
<div class="abs" id="rightedge"></div>
<svg class="abs" style="left:1810px;top:100px" width="100" height="100" viewBox="1810 100 100 100">
<defs><filter id="cbl" x="-30%" y="-30%" width="160%" height="160%"><feGaussianBlur stdDeviation="3"/></filter>
<linearGradient id="cgl" x1="0" y1="0" x2="0" y2="1"><stop offset="0" stop-color="#f6f6f6"/><stop offset="1" stop-color="#c6c6c6"/></linearGradient>
<linearGradient id="cgr" x1="0" y1="0" x2="0" y2="1"><stop offset="0" stop-color="#f8f8f8"/><stop offset="1" stop-color="#cdcdcd"/></linearGradient></defs>
<polygon points="1826,166 1853,190 1892,167 1866,150" fill="#000" opacity="0.200" filter="url(#cbl)"/>
<polygon points="1823.800,121.500 1861.300,108.500 1893.300,127 1852.700,143" fill="#f1f1f1"/>
<polygon points="1823.800,121.500 1852.700,143 1852.700,184.800 1828,161.400" fill="url(#cgl)"/>
<polygon points="1852.700,143 1893.300,127 1890,163.900 1852.700,184.800" fill="url(#cgr)"/>
<path d="M1823.800 121.500L1861.300 108.500L1893.300 127L1852.700 143ZM1852.700 143V184.800M1823.800 121.500L1828 161.400L1852.700 184.800L1890 163.900L1893.300 127" fill="none" stroke="#aaa" stroke-width="0.600" stroke-dasharray="3 1.500"/>
<polygon points="1846.500,140.500 1853.500,137 1860.500,140.500 1860.500,148.500 1853.500,152 1846.500,148.500" fill="#a8dcf2"/>
<text x="1861" y="131" font-size="17" fill="#222" text-anchor="middle" transform="matrix(0.900,-0.300,0.700,0.450,0,0) translate(0,0)" style="display:none"></text>
<g transform="translate(1861,125.500) matrix(0.880,-0.280,0.600,0.380,0,0)"><text x="0" y="9" font-size="27" fill="#222" text-anchor="middle">上</text></g>
<g transform="translate(1839,155) matrix(0.700,0.560,0.080,1,0,0)"><text x="0" y="7" font-size="20" fill="#222" text-anchor="middle">左</text></g>
<g transform="translate(1873,156) matrix(0.850,-0.400,-0.080,1,0,0)"><text x="0" y="8" font-size="23" fill="#222" text-anchor="middle">前</text></g>
</svg>
<div class="abs" id="panel"></div>
<svg class="abs" style="left:1850px;top:205px" width="44" height="400" viewBox="1850 205 44 400">
<defs><g id="cb2"><polygon points="8,0 16,4 8,8 0,4" fill="#fff" stroke="#555" stroke-width="0.600"/><polygon points="0,4 8,8 8,18 0,14" fill="#6e6e6e"/><polygon points="16,4 8,8 8,18 16,14" fill="#2b2b2b"/></g>
<linearGradient id="sepg" x1="0" x2="1" y1="0" y2="0"><stop offset="0" stop-color="#999" stop-opacity="0"/><stop offset="0.500" stop-color="#888"/><stop offset="1" stop-color="#999" stop-opacity="0"/></linearGradient></defs>
<path d="M1871.200 223v17M1862.700 231.500h17" stroke="#222" stroke-width="1.200"/>
<polygon points="1871.200,221 1868.700,225 1873.700,225" fill="#222"/><polygon points="1871.200,242 1868.700,238 1873.700,238" fill="#222"/><polygon points="1860.700,231.500 1864.700,229 1864.700,234" fill="#222"/><polygon points="1881.700,231.500 1877.700,229 1877.700,234" fill="#222"/>
<use href="#cb2" transform="translate(1865.200,258.500) scale(0.750)"/>
<path d="M1873 256.500a10 10 0 0 1 7 11.500M1869 276a10 10 0 0 1 -7 -11.500" stroke="#222" stroke-width="1.200" fill="none"/>
<polygon points="1870.500,256.300 1874.500,254 1874.500,258.800" fill="#222"/><polygon points="1871.700,276 1867.700,273.600 1867.700,278.400" fill="#222"/>
<circle cx="1868.500" cy="298.500" r="6.600" fill="#fff" stroke="#333" stroke-width="1.300"/><path d="M1873.500 303.500l5 5" stroke="#222" stroke-width="3.400" stroke-linecap="round"/>
<rect x="1857" y="322" width="25" height="1" fill="url(#sepg)"/>
<use href="#cb2" transform="translate(1865.200,338.200) scale(0.750)"/>
<path d="M1861.500 339v-3.500h3.500M1877.500 335.500h3.500v3.500M1881 350.500v3.500h-3.500M1865 354h-3.500v-3.500" stroke="#222" stroke-width="1.200" fill="none"/>
<circle cx="1876" cy="375.500" r="5.800" fill="#fff" stroke="#444" stroke-width="0.900"/>
<g transform="translate(1860.500,370.500)"><polygon points="8,0 16,4 8,8 0,4" fill="#fff" stroke="#555" stroke-width="0.600"/><polygon points="0,4 8,8 8,19 0,15" fill="#6e6e6e"/><polygon points="16,4 8,8 8,19 16,15" fill="#2b2b2b"/><path d="M0 15l8-5 8 5M8 0v10" stroke="#999" stroke-width="0.500" fill="none"/></g>
<path d="M1861 414.800c5-9 15.500-9 20.500 0c-5 9-15.500 9-20.500 0z" fill="#fff" stroke="#333" stroke-width="1.200"/><circle cx="1871.200" cy="414.800" r="4.300" fill="#555"/>
<g stroke="#333" stroke-width="1.200" fill="none"><path d="M1861.500 443.500h13l6.500 13h-17zM1862.300 448h14.500M1863.200 452.200h16M1866.500 443.500l2.500 13M1871 443.500l4.500 13"/></g>
<path d="M1867.500 446c3.500-6.500 11-6.500 14.500 0c-3.500 6.500-11 6.500-14.500 0z" fill="#fff" stroke="#333" stroke-width="1"/><circle cx="1874.700" cy="446" r="3" fill="#555"/>
<path d="M1861.500 479.500h5l1.500-3h6.500l1.500 3h5v14h-19.500z" fill="#3a3a3a"/><circle cx="1871.200" cy="486.300" r="4.800" fill="#3a3a3a" stroke="#fff" stroke-width="1.600"/><rect x="1877.500" y="481" width="1.800" height="1.500" fill="#fff"/>
<rect x="1857" y="506" width="25" height="1" fill="url(#sepg)"/>
<g transform="translate(1860.500,524.500)"><polygon points="8.500,0 17,4 8.500,8 0,4" fill="#fff" stroke="#555" stroke-width="0.600"/><polygon points="0,4 8.500,8 8.500,16 0,12" fill="#6e6e6e"/><polygon points="17,4 8.500,8 8.500,16 17,12" fill="#2b2b2b"/><path d="M4.200 2l8.500 4M12.700 2l-8.500 4" stroke="#555" stroke-width="0.500"/></g>
<g transform="translate(1877.500,525) rotate(40)"><path d="M-5.500 5v-5a5.500 5.500 0 0 1 11 0v5h-3.200v-5a2.300 2.300 0 0 0 -4.600 0v5z" fill="#fff" stroke="#444" stroke-width="0.800"/><rect x="-5.500" y="3" width="3.200" height="2.500" fill="#2b2b2b"/><rect x="2.300" y="3" width="3.200" height="2.500" fill="#2b2b2b"/></g>
<path d="M1860.300 521.500h1.500v1.500h-1.500zM1860.300 538h1.500v1.500h-1.500zM1880.500 538h1.500v1.500h-1.500z" fill="#222"/>
<g transform="translate(1873,570) rotate(40)"><path d="M-7 6v-6a7 7 0 0 1 14 0v6h-4v-6a3 3 0 0 0 -6 0v6z" fill="#fff" stroke="#333" stroke-width="0.900"/><rect x="-7" y="4" width="4" height="3" fill="#2b2b2b"/><rect x="3" y="4" width="4" height="3" fill="#2b2b2b"/></g>
<path d="M1862.500 579.500l18.500-19" stroke="#222" stroke-width="1.800"/>
<path d="M1860.500 566c0 8 5 13 10 13.500h10" stroke="#222" stroke-width="1.200" fill="none" stroke-dasharray="1.200 1.200"/>
<polygon points="1859.500,561.500 1862.500,560 1865.500,561.500 1865.500,565.500 1862.500,567 1859.500,565.500" fill="#2b2b2b"/>
</svg>
<div class="abs" id="ghead">グリッドを編集</div>
<div class="abs gin" style="left:1741px">1</div><div class="abs gin" style="left:1821px">1</div>
<div class="abs glab" style="left:1741px">長さスナップ</div><div class="abs glab" style="left:1822px">角度スナップ</div>
<div class="abs" id="taskbar"><div class="abs" style="left:48px;top:0;width:344px;height:8px;background:#f2f2f2;border-top:1px solid #d0d0d0;box-sizing:border-box"></div><div class="abs" style="left:686px;top:0;width:49px;height:8px;background:#99531f"></div><div class="abs" style="left:932px;top:0;width:48px;height:8px;background:#343434"></div><div class="abs" style="left:1916px;top:0;width:1px;height:8px;background:#555"></div></div>
</body></html>
